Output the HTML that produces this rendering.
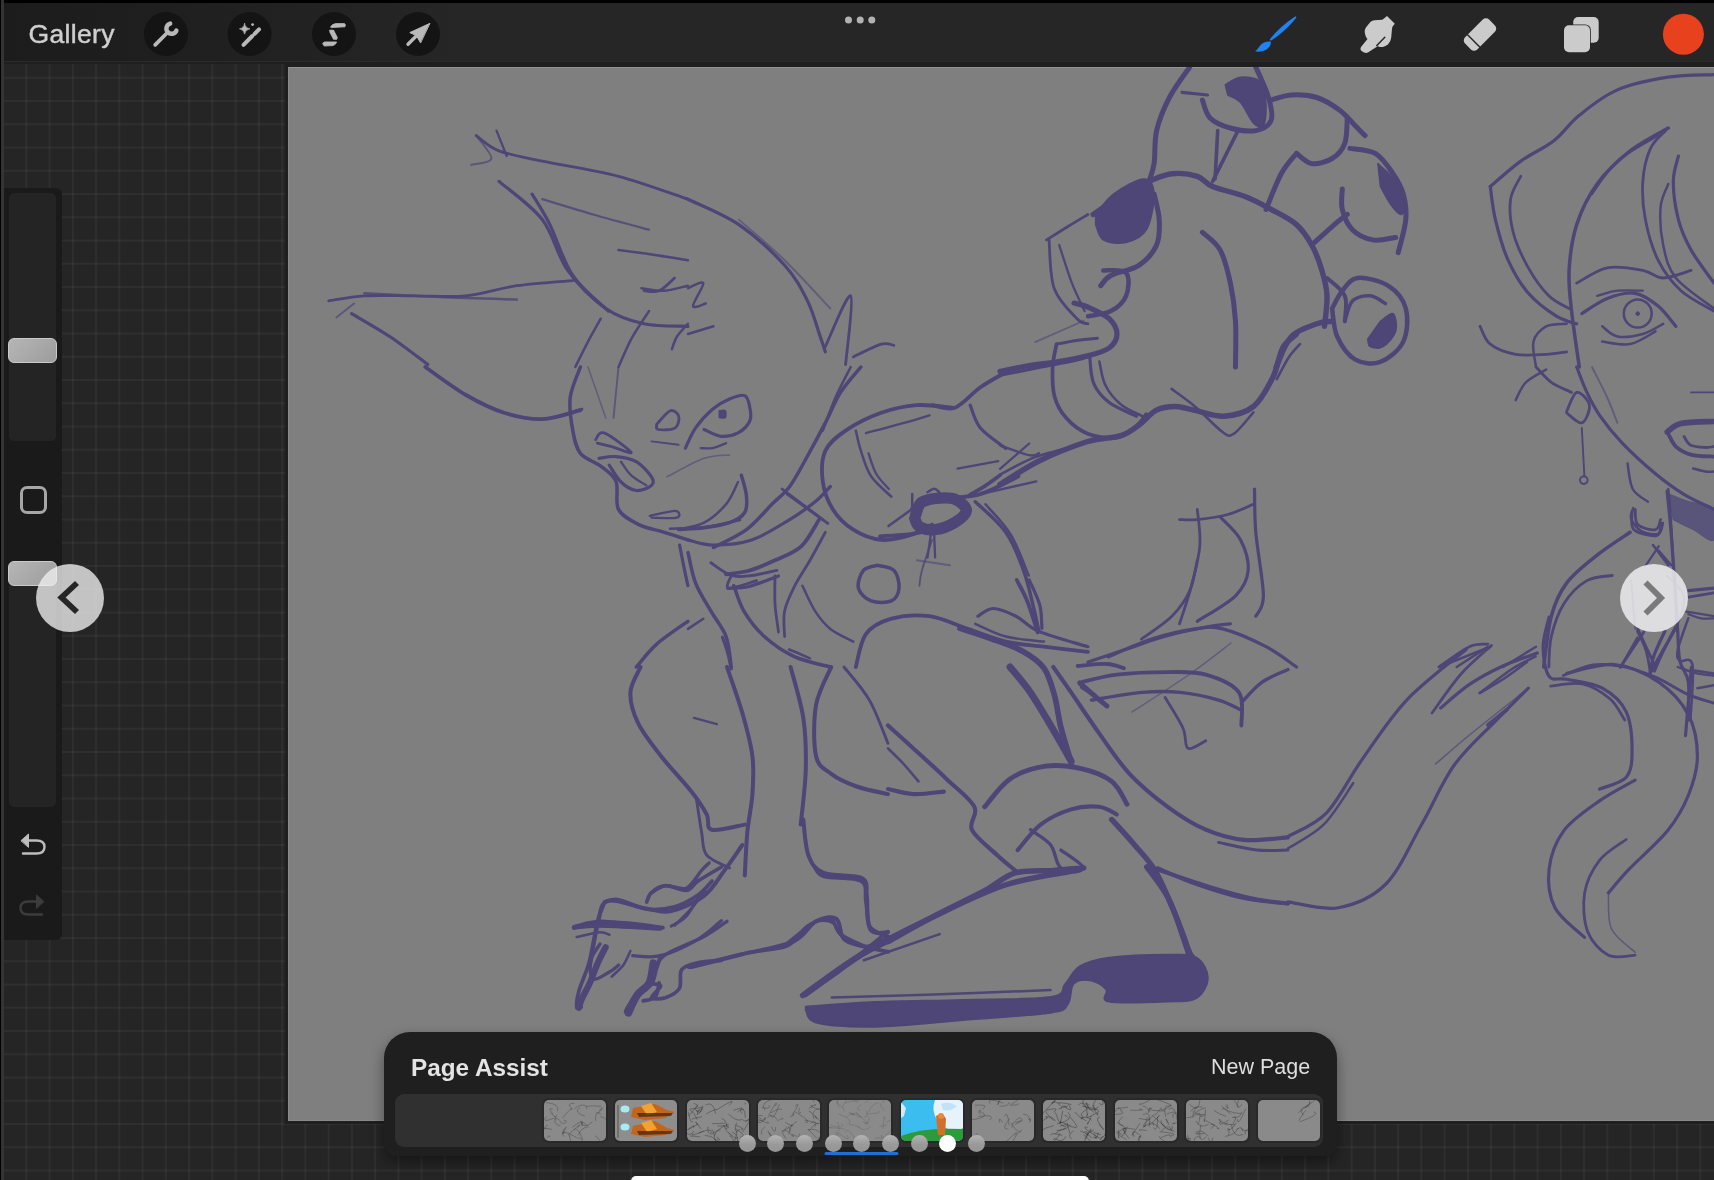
<!DOCTYPE html>
<html><head><meta charset="utf-8">
<style>
*{margin:0;padding:0;box-sizing:border-box}
html,body{width:1714px;height:1180px;overflow:hidden;background:#242424;font-family:"Liberation Sans",sans-serif}
.abs{position:absolute}
#grid{left:0;top:0;width:1714px;height:1180px;
 background-color:#252525;
 background-image:linear-gradient(to right, rgba(255,255,255,0.045) 0 1.8px, transparent 1.8px),
                  linear-gradient(to bottom, rgba(255,255,255,0.045) 0 1.8px, transparent 1.8px);
 background-size:23.25px 23.25px;
 background-position:25.4px 76.8px;}
#topblack{left:0;top:0;width:1714px;height:3px;background:#000}
#toolbar{left:0;top:3px;width:1714px;height:59px;background:linear-gradient(to right,#1c1c1c 0,#1e1e1e 120px,#222 300px,#262626 460px,#262626 100%)}
#tbline{left:0;top:61px;width:1714px;height:1px;background:#2b2b2b}
#tbband{left:0;top:62px;width:1714px;height:2px;background:#1f1f1f}
#leftedge{left:0;top:0;width:4px;height:1180px;background:#343434;border-left:1px solid #000}
#canvas{left:288px;top:67px;width:1426px;height:1054px;background:#7f7f7f;box-shadow:0 0 0 3px #1f1f1f;border-top:1px solid #939393;border-left:1px solid #8a8a8a;border-bottom:1px solid #8a8a8a}
#gallery{left:28.5px;top:18.5px;font-size:26.5px;color:#cfcfcf;letter-spacing:0.35px;-webkit-text-stroke:0.45px #cfcfcf;transform:translateZ(0)}
#sidebar{left:4px;top:188px;width:58px;height:752px;background:#1a1a1a;border-radius:0 6px 6px 0}
.track{left:9px;width:47px;background:#242424;border-radius:5px}
.handle{left:8px;width:49px;height:25px;border-radius:6px;background:linear-gradient(135deg,#b6b6b6,#9c9c9c);border:1px solid #cacaca}
#sq{left:20px;top:486px;width:27px;height:28px;border:3px solid #a6a6a6;border-radius:7px}
.navc{width:68px;height:68px;border-radius:50%}
#panel{left:384px;top:1032px;width:953px;height:124px;background:#1f1f1f;border-radius:26px 26px 12px 12px;box-shadow:0 6px 14px rgba(0,0,0,0.4)}
#strip{left:395px;top:1094px;width:928px;height:53px;background:#303030;border-radius:9px}
.thumb{top:1100px;width:62px;height:41px;background:#8a8a8a;border-radius:5px;overflow:hidden;box-shadow:0 0 0 2px #292929}
.dot{top:1135px;width:17px;height:17px;border-radius:50%;background:linear-gradient(#b4b4b4,#9a9a9a 55%,#949494)}
#pa{left:411px;top:1053.5px;font-size:24.3px;font-weight:bold;color:#e4e4e4;transform:translateZ(0)}
#np{left:1211px;top:1054.5px;font-size:21.5px;color:#dedede;transform:translateZ(0)}
#home{left:631px;top:1176px;width:458px;height:10px;background:#fff;border-radius:5px}
</style></head><body>
<div id="grid" class="abs"></div>
<div id="topblack" class="abs"></div>
<div id="toolbar" class="abs"></div>
<div id="tbline" class="abs"></div>
<div id="tbband" class="abs"></div>
<div id="leftedge" class="abs"></div>
<div id="canvas" class="abs"></div>
<svg class="abs" style="left:288px;top:67px" width="1426" height="1053" viewBox="0 0 1426 1053"><g fill="none" stroke="#4d4677" stroke-linecap="round" stroke-linejoin="round"><path d="M188.2 68.6 C192.0 71.2 200.0 79.7 211.0 83.9 C222.1 88.1 234.3 89.8 254.3 94.1 C274.2 98.3 306.3 103.0 330.5 109.3 C354.8 115.7 388.4 128.4 399.9 132.2" stroke-width="2.8"/><path d="M208.5 63.6 L218.7 89.0" stroke-width="2.3"/><path d="M188.2 68.6 C190.7 72.5 204.3 86.7 203.4 91.5 C202.6 96.4 186.5 96.8 183.1 97.9" stroke-width="1.9" opacity="0.70"/><path d="M211.0 114.4 C218.2 120.8 242.8 137.7 254.3 152.6 C265.7 167.4 269.1 188.6 279.7 203.4 C290.3 218.2 305.1 232.6 317.8 241.5 C330.5 250.4 342.3 253.8 356.0 256.8 C369.6 259.8 392.6 258.9 399.9 259.3" stroke-width="3.2"/><path d="M244.1 127.1 C247.1 132.2 255.1 144.1 261.9 157.6 C268.7 171.2 275.0 194.1 284.8 208.5 C294.5 222.9 314.4 238.2 320.4 244.1" stroke-width="3.2"/><path d="M254.3 132.2 C262.7 134.8 287.3 142.4 305.1 147.5 C322.9 152.6 351.7 160.2 361.0 162.7" stroke-width="2.3" opacity="0.80"/><path d="M330.5 183.1 C336.9 183.9 357.1 186.5 368.7 188.2 C380.2 189.8 394.7 192.4 399.9 193.2" stroke-width="2.5"/><path d="M353.4 221.2 C357.2 221.6 368.5 224.2 376.3 223.7 C384.1 223.3 396.0 219.5 399.9 218.7" stroke-width="2.5"/><path d="M386.5 211.0 C383.9 213.2 376.3 221.6 371.2 223.7 C366.1 225.9 358.5 223.7 356.0 223.7" stroke-width="2.8"/><path d="M40.7 233.9 C46.6 233.1 61.9 229.7 76.3 228.8 C90.7 228.0 110.2 228.8 127.1 228.8 C144.1 228.8 161.0 230.5 178.0 228.8 C194.9 227.1 211.0 221.2 228.8 218.7 C246.6 216.1 275.4 214.4 284.8 213.6" stroke-width="2.8"/><path d="M76.3 226.3 C89.0 226.9 127.1 229.0 152.6 230.1 C178.0 231.2 216.1 232.2 228.8 232.6" stroke-width="2.5" opacity="0.80"/><path d="M63.6 246.6 C69.9 250.4 89.0 261.0 101.7 269.5 C114.4 278.0 133.5 292.8 139.8 297.5" stroke-width="3.2"/><path d="M48.3 250.4 L66.1 236.5" stroke-width="1.9" opacity="0.70"/><path d="M312.7 251.7 C310.6 255.5 304.3 266.5 300.0 274.6 C295.8 282.7 289.4 295.8 287.3 300.0" stroke-width="2.5"/><path d="M361.0 244.1 C358.1 248.7 348.3 262.7 343.2 272.1 C338.2 281.4 332.7 295.4 330.5 300.0" stroke-width="2.5"/><path d="M399.9 256.8 C398.1 258.9 391.7 265.3 389.0 269.5 C386.3 273.8 384.8 280.1 383.9 282.2" stroke-width="2.5"/><path d="M400.0 132.2 C408.5 136.5 434.7 146.6 450.9 157.6 C467.0 168.7 485.2 185.6 496.6 198.3 C508.1 211.0 513.6 222.1 519.5 233.9 C525.4 245.8 529.2 261.0 532.2 269.5 C535.2 278.0 536.5 282.2 537.3 284.8" stroke-width="3.2"/><path d="M450.9 152.6 C458.5 159.3 481.4 178.4 496.6 193.2 C511.9 208.1 534.8 233.5 542.4 241.5" stroke-width="1.9" opacity="0.60"/><path d="M537.3 279.7 C541.5 271.2 559.3 225.9 562.7 228.8 C566.1 231.8 558.5 286.0 557.6 297.5" stroke-width="2.8"/><path d="M565.3 289.9 C569.9 287.7 586.5 279.0 593.2 277.1 C600.0 275.2 603.8 278.2 605.9 278.4" stroke-width="2.8"/><path d="M400.0 221.2 C402.5 220.4 414.4 213.2 415.3 216.1 C416.1 219.1 404.7 235.6 405.1 239.0 C405.5 242.4 415.7 236.9 417.8 236.5" stroke-width="2.5"/><path d="M400.0 267.0 L425.4 259.3" stroke-width="2.5"/><path d="M758.5 172.9 C761.9 170.8 771.9 164.4 778.8 160.2 C785.8 155.9 796.4 149.6 799.9 147.5" stroke-width="2.8"/><path d="M761.0 172.9 C761.9 180.9 761.5 208.1 766.1 221.2 C770.8 234.3 783.4 245.8 789.0 251.7 C794.7 257.6 798.1 256.0 799.9 256.8" stroke-width="2.8"/><path d="M771.2 178.0 C773.3 184.3 779.7 205.1 783.9 216.1 C788.2 227.1 794.5 239.4 796.6 244.1" stroke-width="2.3"/><path d="M901.7 0.0 C898.3 5.1 886.9 19.9 881.4 30.5 C875.9 41.1 871.2 52.5 868.6 63.6 C866.1 74.6 867.4 88.1 866.1 96.6 C864.8 105.1 861.9 111.5 861.0 114.4" stroke-width="5.0"/><path d="M807.6 147.5 C810.6 144.1 817.4 133.1 825.4 127.1 C833.5 121.2 849.2 111.9 855.9 111.9 C862.7 111.9 865.7 118.7 866.1 127.1 C866.5 135.6 863.1 154.7 858.5 162.7 C853.8 170.8 845.3 173.7 838.1 175.4 C830.9 177.1 820.3 175.9 815.3 172.9 C810.2 169.9 808.9 160.2 807.6 157.6 Z" fill="#4d4677" stroke="#4d4677" stroke-width="1.5"/><path d="M805.1 147.5 C810.2 144.1 826.3 132.6 835.6 127.1 C844.9 121.6 853.0 117.8 861.0 114.4 C869.1 111.0 875.9 107.6 883.9 106.8 C892.0 105.9 902.6 107.2 909.3 109.3 C916.1 111.5 916.5 116.1 924.6 119.5 C932.6 122.9 947.9 125.9 957.6 129.7 C967.4 133.5 974.6 137.7 983.1 142.4 C991.5 147.0 1001.7 151.7 1008.5 157.6 C1015.3 163.6 1019.5 170.4 1023.7 178.0 C1028.0 185.6 1031.4 194.9 1033.9 203.4 C1036.5 211.9 1038.6 219.5 1039.0 228.8 C1039.4 238.2 1036.9 254.3 1036.5 259.3" stroke-width="5.4"/><path d="M866.1 127.1 C867.0 131.4 870.8 144.1 871.2 152.6 C871.6 161.0 872.0 170.4 868.6 178.0 C865.3 185.6 858.5 193.2 850.9 198.3 C843.2 203.4 829.2 205.1 822.9 208.5 C816.5 211.9 814.4 217.0 812.7 218.7" stroke-width="5.0"/><path d="M815.3 203.4 C819.1 203.8 834.3 201.7 838.1 205.9 C842.0 210.2 840.7 222.5 838.1 228.8 C835.6 235.2 829.2 240.7 822.9 244.1 C816.5 247.5 803.8 248.3 800.0 249.2" stroke-width="4.5"/><path d="M937.3 17.8 C939.8 16.5 946.6 10.6 952.6 10.2 C958.5 9.7 968.7 10.6 972.9 15.3 C977.1 19.9 977.6 30.9 978.0 38.1 C978.4 45.3 977.6 55.5 975.4 58.5 C973.3 61.4 969.1 59.8 965.3 55.9 C961.5 52.1 956.8 40.3 952.6 35.6 C948.3 30.9 942.0 29.2 939.8 28.0 Z" fill="#4d4677" stroke="#4d4677" stroke-width="1.5"/><path d="M914.4 33.1 C915.7 36.0 917.4 46.2 922.0 50.9 C926.7 55.5 934.8 58.9 942.4 61.0 C950.0 63.1 961.0 64.8 967.8 63.6 C974.6 62.3 980.9 58.9 983.1 53.4 C985.2 47.9 983.1 39.4 980.5 30.5 C978.0 21.6 969.9 5.1 967.8 0.0" stroke-width="5.0"/><path d="M950.0 63.6 C947.9 67.8 941.5 80.5 937.3 89.0 C933.1 97.5 926.7 110.2 924.6 114.4" stroke-width="3.6"/><path d="M929.7 63.6 L927.1 111.9" stroke-width="3.6"/><path d="M894.1 25.4 L919.5 28.0" stroke-width="3.2"/><path d="M983.1 33.1 C986.5 32.2 995.8 28.4 1003.4 28.0 C1011.0 27.5 1020.8 28.0 1028.8 30.5 C1036.9 33.1 1045.4 38.6 1051.7 43.2 C1058.1 47.9 1062.7 54.2 1067.0 58.5 C1071.2 62.7 1075.4 67.0 1077.1 68.6" stroke-width="5.0"/><path d="M1059.3 50.9 C1058.9 55.1 1059.3 69.5 1056.8 76.3 C1054.3 83.1 1049.6 88.1 1044.1 91.5 C1038.6 94.9 1029.7 97.5 1023.7 96.6 C1017.8 95.8 1011.0 88.1 1008.5 86.4" stroke-width="5.0"/><path d="M978.0 142.4 C980.5 136.5 988.2 116.1 993.2 106.8 C998.3 97.5 1005.9 89.8 1008.5 86.4" stroke-width="5.0"/><path d="M1061.9 81.4 C1066.1 82.2 1080.1 82.2 1087.3 86.4 C1094.5 90.7 1100.4 100.0 1105.1 106.8 C1109.8 113.6 1113.2 119.5 1115.3 127.1 C1117.4 134.8 1118.7 142.8 1117.8 152.6 C1117.0 162.3 1111.5 180.1 1110.2 185.6" stroke-width="5.0"/><path d="M1089.9 96.6 C1092.4 99.2 1100.7 105.1 1105.1 111.9 C1109.6 118.7 1115.3 131.4 1116.6 137.3 C1117.8 143.2 1115.1 147.5 1112.7 147.5 C1110.4 147.5 1106.0 142.0 1102.6 137.3 C1099.2 132.6 1094.1 122.5 1092.4 119.5 Z" fill="#4d4677" stroke="#4d4677" stroke-width="1.5"/><path d="M1054.3 122.0 C1054.3 125.4 1052.6 135.6 1054.3 142.4 C1056.0 149.2 1059.3 157.6 1064.4 162.7 C1069.5 167.8 1077.6 171.6 1084.8 172.9 C1092.0 174.2 1103.8 170.8 1107.7 170.4" stroke-width="5.0"/><path d="M1023.7 178.0 C1028.0 174.2 1043.2 160.2 1049.2 155.1 C1055.1 150.0 1057.6 148.7 1059.3 147.5" stroke-width="5.0"/><path d="M914.4 165.3 C917.4 168.2 927.6 174.6 932.2 183.1 C936.9 191.5 939.8 204.3 942.4 216.1 C944.9 228.0 946.6 240.3 947.5 254.3 C948.3 268.2 947.5 292.4 947.5 300.0" stroke-width="5.0"/><path d="M1044.1 241.5 C1045.8 238.6 1050.0 228.8 1054.3 223.7 C1058.5 218.7 1061.9 211.9 1069.5 211.0 C1077.1 210.2 1092.0 213.6 1100.0 218.7 C1108.1 223.7 1115.3 232.2 1117.8 241.5 C1120.4 250.9 1119.5 265.7 1115.3 274.6 C1111.0 283.5 1100.4 292.0 1092.4 294.9 C1084.3 297.9 1074.2 296.6 1067.0 292.4 C1059.8 288.2 1053.0 278.0 1049.2 269.5 C1045.4 261.0 1044.9 246.2 1044.1 241.5" stroke-width="4.5"/><path d="M1056.8 254.3 C1058.1 250.9 1060.2 238.2 1064.4 233.9 C1068.7 229.7 1076.7 228.4 1082.2 228.8 C1087.7 229.3 1094.9 235.2 1097.5 236.5" stroke-width="3.6"/><path d="M1092.4 254.3 C1094.5 253.0 1102.6 244.9 1105.1 246.6 C1107.7 248.3 1109.3 258.9 1107.7 264.4 C1106.0 269.9 1099.2 277.1 1094.9 279.7 C1090.7 282.2 1084.8 281.0 1082.2 279.7 C1079.7 278.4 1080.1 273.3 1079.7 272.1 Z" fill="#4d4677" stroke="#4d4677" stroke-width="1.5"/><path d="M1039.0 211.0 C1042.0 214.0 1053.8 221.6 1056.8 228.8 C1059.8 236.0 1056.8 250.0 1056.8 254.3" stroke-width="4.0"/><path d="M988.2 300.0 C990.7 294.9 996.6 276.7 1003.4 269.5 C1010.2 262.3 1022.1 259.3 1028.8 256.8 C1035.6 254.3 1041.5 254.7 1044.1 254.3" stroke-width="5.4"/><path d="M1202.3 119.5 C1207.4 115.3 1222.2 101.7 1232.8 94.1 C1243.4 86.4 1256.1 81.4 1265.8 73.7 C1275.6 66.1 1280.7 56.8 1291.3 48.3 C1301.9 39.8 1314.6 29.2 1329.4 22.9 C1344.2 16.5 1364.2 12.7 1380.3 10.2 C1396.4 7.6 1418.4 8.1 1426.0 7.6" stroke-width="3.2"/><path d="M1202.3 119.5 C1203.1 125.0 1204.4 140.3 1207.4 152.6 C1210.3 164.8 1214.6 180.9 1220.1 193.2 C1225.6 205.5 1232.4 217.0 1240.4 226.3 C1248.5 235.6 1260.3 244.1 1268.4 249.2 C1276.4 254.3 1285.3 255.5 1288.7 256.8" stroke-width="3.2"/><path d="M1232.8 109.3 C1231.1 113.1 1223.9 122.9 1222.6 132.2 C1221.3 141.5 1222.2 153.8 1225.2 165.3 C1228.1 176.7 1234.5 190.3 1240.4 200.9 C1246.3 211.5 1254.0 222.1 1260.8 228.8 C1267.5 235.6 1277.7 239.4 1281.1 241.5" stroke-width="2.8"/><path d="M1380.3 61.0 C1373.9 64.8 1354.0 74.6 1342.1 83.9 C1330.3 93.2 1318.0 104.7 1309.1 117.0 C1300.2 129.2 1293.4 143.2 1288.7 157.6 C1284.1 172.0 1281.9 189.0 1281.1 203.4 C1280.3 217.8 1281.9 228.0 1283.6 244.1 C1285.3 260.2 1290.0 290.7 1291.3 300.0" stroke-width="3.5"/><path d="M1370.1 68.6 C1363.3 72.9 1340.4 84.3 1329.4 94.1 C1318.4 103.8 1308.2 121.6 1304.0 127.1" stroke-width="2.3"/><path d="M1377.7 63.6 C1375.2 66.5 1366.3 72.9 1362.5 81.4 C1358.6 89.8 1355.7 102.6 1354.8 114.4 C1354.0 126.3 1354.8 139.4 1357.4 152.6 C1359.9 165.7 1364.2 181.4 1370.1 193.2 C1376.0 205.1 1383.6 215.3 1393.0 223.7 C1402.3 232.2 1420.5 240.7 1426.0 244.1" stroke-width="2.8"/><path d="M1390.4 89.0 C1389.6 93.2 1385.3 103.8 1385.3 114.4 C1385.3 125.0 1387.5 141.1 1390.4 152.6 C1393.4 164.0 1397.2 172.5 1403.1 183.1 C1409.1 193.7 1422.2 210.6 1426.0 216.1" stroke-width="3.2"/><path d="M1380.3 117.0 C1379.0 120.8 1373.5 129.7 1372.6 139.8 C1371.8 150.0 1372.6 166.1 1375.2 178.0 C1377.7 189.8 1379.4 200.4 1387.9 211.0 C1396.4 221.6 1419.7 236.5 1426.0 241.5" stroke-width="2.5"/><path d="M1288.7 216.1 C1293.8 213.6 1308.2 203.0 1319.2 200.9 C1330.3 198.7 1345.5 201.7 1354.8 203.4 C1364.2 205.1 1367.1 211.0 1375.2 211.0 C1383.2 211.0 1398.5 204.7 1403.1 203.4" stroke-width="2.8"/><path d="M1293.8 246.6 C1298.0 244.1 1310.3 234.8 1319.2 231.4 C1328.1 228.0 1338.7 225.0 1347.2 226.3 C1355.7 227.6 1363.3 233.5 1370.1 239.0 C1376.9 244.5 1384.9 256.0 1387.9 259.3" stroke-width="3.2"/><path d="M1309.1 228.8 C1312.5 228.0 1321.8 224.6 1329.4 223.7 C1337.0 222.9 1350.6 223.7 1354.8 223.7" stroke-width="2.3"/><path d="M1314.2 259.3 C1316.7 261.0 1322.6 268.2 1329.4 269.5 C1336.2 270.8 1347.2 269.1 1354.8 267.0 C1362.5 264.9 1371.8 258.5 1375.2 256.8" stroke-width="2.5"/><path d="M1314.2 274.6 C1318.8 275.0 1333.2 278.8 1342.1 277.1 C1351.0 275.4 1363.3 266.5 1367.5 264.4" stroke-width="2.5"/><path d="M1363.7 246.6 C1363.6 247.5 1363.4 250.3 1362.7 252.0 C1362.0 253.6 1360.9 255.3 1359.6 256.5 C1358.4 257.8 1356.7 258.9 1355.1 259.6 C1353.5 260.2 1351.5 260.6 1349.7 260.6 C1348.0 260.6 1346.0 260.2 1344.4 259.6 C1342.7 258.9 1341.1 257.8 1339.9 256.5 C1338.6 255.3 1337.5 253.6 1336.8 252.0 C1336.1 250.3 1335.8 248.4 1335.8 246.6 C1335.8 244.8 1336.1 242.9 1336.8 241.3 C1337.5 239.6 1338.6 238.0 1339.9 236.7 C1341.1 235.5 1342.7 234.4 1344.4 233.7 C1346.0 233.0 1348.0 232.6 1349.7 232.6 C1351.5 232.6 1353.5 233.0 1355.1 233.7 C1356.7 234.4 1358.4 235.5 1359.6 236.7 C1360.9 238.0 1362.0 239.6 1362.7 241.3 C1363.4 242.9 1363.6 245.7 1363.7 246.6" stroke-width="2.5"/><path d="M1351.3 246.6 C1351.2 246.8 1351.1 247.5 1350.8 247.7 C1350.6 248.0 1350.1 248.2 1349.7 248.2 C1349.4 248.2 1348.9 248.0 1348.7 247.7 C1348.4 247.5 1348.2 247.0 1348.2 246.6 C1348.2 246.3 1348.4 245.8 1348.7 245.6 C1348.9 245.3 1349.4 245.1 1349.7 245.1 C1350.1 245.1 1350.6 245.5 1350.8 245.6 Z" fill="#4d4677" stroke="#4d4677" stroke-width="1.5"/><path d="M1192.1 259.3 C1193.8 262.3 1196.3 272.5 1202.3 277.1 C1208.2 281.8 1218.4 285.6 1227.7 287.3 C1237.0 289.0 1249.7 287.7 1258.2 287.3 C1266.7 286.9 1275.2 285.2 1278.6 284.8" stroke-width="2.8"/><path d="M1248.0 300.0 C1247.6 295.8 1243.8 281.4 1245.5 274.6 C1247.2 267.8 1252.7 262.3 1258.2 259.3 C1263.7 256.4 1275.2 257.2 1278.6 256.8" stroke-width="2.5"/><path d="M137.3 300.0 C144.1 304.7 164.8 320.3 178.0 328.0 C191.1 335.6 203.4 341.7 216.1 345.8 C228.8 349.8 241.5 352.5 254.3 352.1 C267.0 351.7 286.0 344.7 292.4 343.2" stroke-width="3.8"/><path d="M292.4 300.0 C290.7 305.1 283.5 319.9 282.2 330.5 C281.0 341.1 283.1 354.2 284.8 363.6 C286.5 372.9 287.7 380.5 292.4 386.4 C297.1 392.4 306.8 394.5 312.7 399.2 C318.7 403.8 325.0 407.2 328.0 414.4 C331.0 421.6 326.7 435.2 330.5 442.4 C334.4 449.6 343.2 453.8 350.9 457.6 C358.5 461.5 368.1 462.7 376.3 465.3 C384.5 467.8 396.0 471.6 399.9 472.9" stroke-width="3.5"/><path d="M348.3 600.0 C351.7 596.2 360.1 584.8 368.7 577.1 C377.3 569.5 394.7 558.1 399.9 554.3" stroke-width="3.5"/><path d="M391.6 478.0 C392.4 482.2 395.2 496.6 396.6 503.4 C398.0 510.2 399.4 516.1 399.9 518.7" stroke-width="3.2"/><path d="M300.0 300.0 L317.8 350.9" stroke-width="1.5" opacity="0.60"/><path d="M330.5 300.0 L325.5 350.9" stroke-width="1.9" opacity="0.70"/><path d="M400.0 472.9 C404.2 473.7 414.8 478.0 425.4 478.0 C436.0 478.0 450.9 477.1 463.6 472.9 C476.3 468.7 491.1 458.9 501.7 452.6 C512.3 446.2 520.3 440.3 527.1 434.8 C533.9 429.2 539.8 422.0 542.4 419.5" stroke-width="3.2"/><path d="M572.9 300.0 C569.5 304.2 558.5 316.1 552.6 325.4 C546.6 334.7 542.8 345.3 537.3 355.9 C531.8 366.5 525.4 378.4 519.5 389.0 C513.6 399.6 507.6 411.5 501.7 419.5 C495.8 427.6 491.1 430.1 483.9 437.3 C476.7 444.5 468.2 455.5 458.5 462.7 C448.7 469.9 430.9 477.6 425.4 480.5" stroke-width="3.5"/><path d="M562.7 300.0 C560.2 305.1 552.1 319.9 547.5 330.5 C542.8 341.1 536.9 358.1 534.8 363.6" stroke-width="2.5"/><path d="M494.1 422.0 L534.8 452.6" stroke-width="2.8"/><path d="M499.2 427.1 L539.8 456.4" stroke-width="2.8"/><path d="M664.4 340.7 C658.5 340.3 640.7 337.3 628.8 338.1 C617.0 339.0 605.1 341.5 593.2 345.8 C581.4 350.0 567.0 357.2 557.6 363.6 C548.3 369.9 541.1 375.4 537.3 383.9 C533.5 392.4 533.5 404.7 534.8 414.4 C536.0 424.2 539.8 434.3 544.9 442.4 C550.0 450.4 557.2 457.6 565.3 462.7 C573.3 467.8 583.5 472.0 593.2 472.9 C603.0 473.7 615.3 470.4 623.7 467.8 C632.2 465.3 640.7 459.3 644.1 457.6" stroke-width="3.8"/><path d="M567.8 363.6 C568.7 367.0 570.4 376.3 572.9 383.9 C575.4 391.5 578.0 401.7 583.1 409.3 C588.2 417.0 600.0 426.3 603.4 429.7" stroke-width="2.5"/><path d="M580.5 386.4 C581.8 389.8 584.8 400.9 588.2 406.8 C591.5 412.7 598.7 419.5 600.9 422.0" stroke-width="2.3"/><path d="M578.0 366.1 C584.3 364.4 605.5 358.9 616.1 355.9 C626.7 353.0 637.3 349.6 641.5 348.3" stroke-width="2.3"/><path d="M644.1 338.1 C647.9 338.6 658.9 343.6 667.0 340.7 C675.0 337.7 683.9 326.3 692.4 320.3 C700.9 314.4 713.6 307.6 717.8 305.1" stroke-width="3.8"/><path d="M682.2 338.1 C683.9 342.0 686.5 353.8 692.4 361.0 C698.3 368.2 713.6 378.0 717.8 381.4" stroke-width="3.2"/><path d="M623.7 442.4 C628.8 440.7 642.8 434.8 654.3 432.2 C665.7 429.7 679.7 430.9 692.4 427.1 C705.1 423.3 724.2 412.3 730.5 409.3" stroke-width="3.8"/><path d="M669.5 401.7 L710.2 394.1" stroke-width="2.3"/><path d="M692.4 427.1 L748.3 414.4" stroke-width="2.5"/><path d="M687.3 434.8 C692.4 439.8 709.8 453.8 717.8 465.3 C725.9 476.7 731.0 490.7 735.6 503.4 C740.3 516.1 743.2 531.4 745.8 541.5 C748.3 551.7 750.0 560.6 750.9 564.4" stroke-width="3.5"/><path d="M697.5 437.3 C701.7 442.4 715.7 455.9 722.9 467.8 C730.1 479.7 737.7 501.7 740.7 508.5" stroke-width="2.5"/><path d="M589.4 498.3 C592.2 499.2 602.3 499.6 605.9 503.4 C609.6 507.2 611.5 516.1 611.0 521.2 C610.6 526.3 608.1 531.8 603.4 533.9 C598.7 536.0 588.6 536.0 583.1 533.9 C577.6 531.8 571.6 526.3 570.4 521.2 C569.1 516.1 572.3 507.2 575.4 503.4 C578.6 499.6 587.1 499.2 589.4 498.3" stroke-width="3.5"/><path d="M400.0 485.6 C401.3 490.7 403.8 506.4 407.6 516.1 C411.4 525.9 417.8 535.2 422.9 544.1 C428.0 553.0 434.7 560.2 438.1 569.5 C441.5 578.8 442.4 594.9 443.2 600.0" stroke-width="3.5"/><path d="M445.8 518.7 C447.5 522.9 450.9 535.6 455.9 544.1 C461.0 552.6 467.8 561.9 476.3 569.5 C484.8 577.1 495.8 584.8 506.8 589.9 C517.8 594.9 536.5 598.3 542.4 600.0" stroke-width="3.5"/><path d="M422.9 495.8 C426.3 497.9 436.4 506.4 443.2 508.5 C450.0 510.6 455.9 509.3 463.6 508.5 C471.2 507.6 484.8 504.3 489.0 503.4" stroke-width="2.8"/><path d="M443.2 508.5 C442.8 510.6 436.4 520.4 440.7 521.2 C444.9 522.1 464.0 514.8 468.6 513.6" stroke-width="2.8"/><path d="M567.8 600.0 C569.5 594.5 572.0 575.0 578.0 567.0 C583.9 558.9 592.8 554.7 603.4 551.7 C614.0 548.7 628.8 547.5 641.5 549.2 C654.3 550.9 667.0 557.6 679.7 561.9 C692.4 566.1 705.1 571.6 717.8 574.6 C730.5 577.6 742.3 578.0 756.0 579.7 C769.6 581.4 792.6 583.9 799.9 584.8" stroke-width="3.8"/><path d="M537.3 465.3 C534.8 469.9 527.1 484.3 522.0 493.2 C517.0 502.1 511.0 510.2 506.8 518.7 C502.6 527.1 498.3 535.6 496.6 544.1 C494.9 552.6 496.6 565.3 496.6 569.5" stroke-width="2.8"/><path d="M514.4 518.7 C516.5 522.9 522.5 536.9 527.1 544.1 C531.8 551.3 536.0 556.8 542.4 561.9 C548.7 567.0 561.5 572.5 565.3 574.6" stroke-width="2.5"/><path d="M644.1 472.9 C642.4 478.0 636.0 495.8 633.9 503.4 C631.8 511.0 631.8 516.1 631.4 518.7" stroke-width="1.9" opacity="0.80"/><path d="M628.8 493.2 L661.9 498.3" stroke-width="1.9" opacity="0.60"/><path d="M689.9 549.2 C692.4 547.9 698.8 541.5 705.1 541.5 C711.5 541.5 720.4 545.4 728.0 549.2 C735.6 553.0 738.9 559.3 750.9 564.4 C762.9 569.5 791.8 577.1 799.9 579.7" stroke-width="3.2"/><path d="M687.3 556.8 C692.4 558.9 706.4 566.5 717.8 569.5 C729.3 572.5 749.6 573.8 756.0 574.6" stroke-width="2.5"/><path d="M400.0 561.9 L415.3 551.7" stroke-width="2.5"/><path d="M891.5 452.6 C894.5 452.6 901.3 453.4 909.3 452.6 C917.4 451.7 930.5 450.0 939.8 447.5 C949.2 444.9 961.0 439.0 965.3 437.3" stroke-width="2.8"/><path d="M966.5 422.0 C966.8 429.2 966.3 447.5 967.8 465.3 C969.3 483.1 975.4 514.8 975.4 528.8 C975.4 542.8 969.1 545.8 967.8 549.2" stroke-width="3.2"/><path d="M909.3 442.4 C909.8 448.3 912.7 465.7 911.9 478.0 C911.0 490.3 907.6 503.0 904.2 516.1 C900.9 529.3 893.7 550.0 891.5 556.8" stroke-width="2.8"/><path d="M932.2 450.0 C935.6 453.8 947.9 464.0 952.6 472.9 C957.2 481.8 961.0 494.1 960.2 503.4 C959.3 512.7 955.9 520.4 947.5 528.8 C939.0 537.3 915.7 550.0 909.3 554.3" stroke-width="3.2"/><path d="M853.4 572.1 C858.5 568.2 875.9 557.2 883.9 549.2 C892.0 541.1 897.5 533.1 901.7 523.7 C905.9 514.4 908.1 498.3 909.3 493.2" stroke-width="2.8"/><path d="M800.0 594.9 C806.4 592.8 825.4 586.5 838.1 582.2 C850.9 578.0 862.3 573.3 876.3 569.5 C890.3 565.7 911.0 561.5 922.0 559.3 C933.1 557.2 939.0 557.2 942.4 556.8" stroke-width="3.2"/><path d="M820.3 589.9 C827.5 586.9 849.2 576.7 863.6 572.1 C878.0 567.4 894.9 563.6 906.8 561.9 C918.7 560.2 922.9 558.9 934.8 561.9 C946.6 564.9 965.7 573.3 978.0 579.7 C990.3 586.0 1003.4 596.6 1008.5 600.0" stroke-width="3.2"/><path d="M1150.9 600.0 C1156.0 596.6 1173.2 583.5 1181.4 579.7 C1189.6 575.9 1196.9 577.6 1199.9 577.1" stroke-width="2.8"/><path d="M1168.7 600.0 L1199.9 579.7" stroke-width="2.5"/><path d="M1288.7 300.0 C1290.4 304.2 1295.1 317.4 1298.9 325.4 C1302.7 333.5 1305.7 339.8 1311.6 348.3 C1317.5 356.8 1325.2 366.5 1334.5 376.3 C1343.8 386.0 1357.4 398.3 1367.5 406.8 C1377.7 415.3 1385.8 421.2 1395.5 427.1 C1405.3 433.1 1420.9 439.8 1426.0 442.4" stroke-width="3.2"/><path d="M1304.0 300.0 C1306.5 305.1 1315.0 321.2 1319.2 330.5 C1323.5 339.8 1327.7 351.7 1329.4 355.9" stroke-width="1.9" opacity="0.60"/><path d="M1278.6 344.5 C1280.3 341.3 1284.9 326.5 1288.7 325.4 C1292.5 324.4 1300.6 333.1 1301.4 338.1 C1302.3 343.2 1297.6 354.7 1293.8 355.9 C1290.0 357.2 1281.1 347.5 1278.6 345.8" stroke-width="2.8"/><path d="M1293.8 361.0 L1296.4 409.3" stroke-width="1.9"/><path d="M1299.7 413.1 C1299.6 413.5 1299.5 414.5 1299.1 415.1 C1298.8 415.6 1298.3 416.1 1297.8 416.4 C1297.2 416.8 1296.5 417.0 1295.8 417.0 C1295.2 417.0 1294.5 416.8 1293.9 416.4 C1293.4 416.1 1292.9 415.6 1292.5 415.1 C1292.2 414.5 1292.0 413.8 1292.0 413.1 C1292.0 412.5 1292.2 411.8 1292.5 411.2 C1292.9 410.7 1293.4 410.2 1293.9 409.8 C1294.5 409.5 1295.2 409.3 1295.8 409.3 C1296.5 409.3 1297.2 409.5 1297.8 409.8 C1298.3 410.2 1298.8 410.7 1299.1 411.2 C1299.5 411.8 1299.6 412.8 1299.7 413.1" stroke-width="1.9"/><path d="M1227.7 333.1 C1229.4 330.1 1232.8 320.3 1237.9 315.3 C1243.0 310.2 1254.8 304.7 1258.2 302.5" stroke-width="2.5"/><path d="M1248.0 300.0 C1250.6 302.5 1257.4 311.0 1263.3 315.3 C1269.2 319.5 1280.3 323.7 1283.6 325.4" stroke-width="2.8"/><path d="M1403.1 325.4 L1426.0 325.4" stroke-width="1.9"/><path d="M1380.3 427.1 C1383.6 428.4 1393.0 432.2 1400.6 434.8 C1408.2 437.3 1421.8 436.0 1426.0 442.4 C1430.3 448.7 1429.4 469.5 1426.0 472.9 C1422.6 476.3 1412.5 466.1 1405.7 462.7 C1398.9 459.3 1388.7 454.3 1385.3 452.6 Z" fill="#4d4677" stroke="#4d4677" stroke-width="1.5" opacity="0.75"/><path d="M1380.3 422.0 C1380.7 427.1 1382.0 439.8 1382.8 452.6 C1383.6 465.3 1384.9 490.7 1385.3 498.3" stroke-width="2.5"/><path d="M1339.6 396.6 C1340.4 400.9 1341.3 415.7 1344.7 422.0 C1348.1 428.4 1357.4 432.6 1359.9 434.8" stroke-width="2.5"/><path d="M1347.2 442.4 C1347.6 444.9 1346.4 454.3 1349.7 457.6 C1353.1 461.0 1363.7 463.6 1367.5 462.7 C1371.4 461.9 1371.8 454.3 1372.6 452.6" stroke-width="2.8"/><path d="M1342.1 465.3 C1336.6 469.1 1319.7 479.7 1309.1 488.2 C1298.5 496.6 1286.2 505.9 1278.6 516.1 C1270.9 526.3 1267.1 535.2 1263.3 549.2 C1259.5 563.2 1256.9 591.6 1255.7 600.0" stroke-width="3.5"/><path d="M1324.3 508.5 C1320.1 509.3 1306.9 508.9 1298.9 513.6 C1290.8 518.2 1281.9 527.1 1276.0 536.5 C1270.1 545.8 1265.8 558.9 1263.3 569.5 C1260.8 580.1 1261.2 594.9 1260.8 600.0" stroke-width="2.8"/><path d="M1365.0 478.0 L1380.3 498.3" stroke-width="2.5"/><path d="M1349.7 561.9 L1367.5 600.0" stroke-width="2.8"/><path d="M1400.6 523.7 L1426.0 521.2" stroke-width="3.2"/><path d="M1395.5 544.1 L1426.0 549.2" stroke-width="2.3"/><path d="M1151.4 600.0 L1202.3 579.7" stroke-width="2.5"/><path d="M1215.0 600.0 L1248.0 579.7" stroke-width="2.5"/><path d="M352.6 600.0 C350.9 604.2 342.8 616.1 342.4 625.4 C342.0 634.7 344.9 645.3 350.0 655.9 C355.1 666.5 364.0 677.5 372.9 689.0 C381.8 700.4 395.8 714.8 403.4 724.6 C411.0 734.3 415.3 741.1 418.7 747.5 C422.1 753.8 417.4 761.0 423.7 762.7 C430.1 764.4 451.3 758.5 456.8 757.6" stroke-width="4.0"/><path d="M408.5 732.2 C409.3 737.7 411.9 755.9 413.6 765.3 C415.3 774.6 414.0 782.2 418.7 788.2 C423.3 794.1 437.7 798.7 441.5 800.9" stroke-width="2.9"/><path d="M439.0 600.0 C441.5 607.6 450.0 630.9 454.3 645.8 C458.5 660.6 462.7 675.4 464.4 689.0 C466.1 702.6 465.3 714.4 464.4 727.1 C463.6 739.8 460.6 751.7 459.3 765.3 C458.1 778.8 457.2 801.3 456.8 808.5" stroke-width="4.0"/><path d="M405.9 650.9 L428.8 657.2" stroke-width="2.4"/><path d="M502.6 600.0 C504.7 608.5 512.7 633.9 515.3 650.9 C517.8 667.8 518.2 683.9 517.8 701.7 C517.4 719.5 513.6 748.3 512.7 757.6" stroke-width="4.0"/><path d="M515.3 752.6 C516.1 758.5 517.0 779.3 520.4 788.2 C523.8 797.1 526.7 802.1 535.6 805.9 C544.5 809.8 566.6 807.2 573.8 811.0 C581.0 814.8 577.6 820.8 578.8 828.8 C580.1 836.9 577.9 852.6 581.4 859.3 C584.9 866.1 596.9 867.8 599.9 869.5" stroke-width="4.0"/><path d="M543.2 600.0 C540.7 606.4 530.5 623.3 528.0 638.1 C525.5 653.0 525.5 677.5 528.0 689.0 C530.5 700.4 536.5 701.7 543.2 706.8 C550.0 711.9 559.2 716.1 568.7 719.5 C578.1 722.9 594.7 725.9 599.9 727.1" stroke-width="4.0"/><path d="M556.0 600.0 C560.2 605.5 574.1 620.3 581.4 633.1 C588.7 645.8 596.9 669.1 599.9 676.3" stroke-width="2.9"/><path d="M454.3 778.0 C451.3 782.2 442.8 794.9 436.5 803.4 C430.1 811.9 425.0 822.1 416.1 828.8 C407.2 835.6 392.8 842.0 383.1 844.1 C373.3 846.2 368.2 843.2 357.6 841.5 C347.0 839.9 327.6 831.0 319.5 833.9 C311.5 836.9 312.3 848.3 309.3 859.3 C306.4 870.4 303.0 893.2 301.7 900.0" stroke-width="4.0"/><path d="M362.7 826.3 C365.3 825.0 372.0 819.5 378.0 818.7 C383.9 817.8 392.4 823.7 398.3 821.2 C404.3 818.7 409.8 807.6 413.6 803.4 C417.4 799.2 419.9 797.1 421.2 795.8" stroke-width="3.3"/><path d="M286.4 859.3 C291.5 858.5 302.6 853.8 317.0 854.3 C331.4 854.7 363.6 860.6 372.9 861.9" stroke-width="3.3"/><path d="M383.1 859.3 C385.6 857.6 393.7 854.3 398.3 849.2 C403.0 844.1 408.9 832.2 411.0 828.8" stroke-width="2.9"/><path d="M367.8 900.0 C369.5 897.9 369.9 892.4 378.0 887.3 C386.0 882.2 405.9 875.0 416.1 869.5 C426.3 864.0 435.2 856.8 439.0 854.3" stroke-width="3.3"/><path d="M403.4 900.0 C411.9 897.9 437.3 891.6 454.3 887.3 C471.2 883.1 492.8 880.1 505.1 874.6 C517.4 869.1 520.8 858.1 528.0 854.3 C535.2 850.4 543.7 848.7 548.3 851.7 C553.0 854.7 551.3 867.4 556.0 872.1 C560.6 876.7 569.0 877.6 576.3 879.7 C583.6 881.8 596.0 883.9 599.9 884.8" stroke-width="4.0"/><path d="M556.0 900.0 L599.9 864.4" stroke-width="3.3"/><path d="M722.0 600.0 C725.4 604.2 735.6 615.7 742.4 625.4 C749.2 635.2 755.9 647.0 762.7 658.5 C769.5 669.9 779.7 688.1 783.1 694.1" stroke-width="6.9"/><path d="M765.3 600.0 C768.2 604.2 775.4 614.4 783.1 625.4 C790.7 636.4 801.3 652.5 811.0 666.1 C820.8 679.7 830.1 694.5 841.5 706.8 C853.0 719.1 867.0 730.5 879.7 739.8 C892.4 749.2 905.1 757.2 917.8 762.7 C930.5 768.2 942.3 771.6 956.0 772.9 C969.6 774.2 992.6 770.8 999.9 770.4" stroke-width="4.1"/><path d="M930.5 775.4 C936.9 776.7 957.1 781.8 968.7 783.1 C980.2 784.3 994.7 783.1 999.9 783.1" stroke-width="3.0"/><path d="M600.0 658.5 C604.2 662.3 615.7 672.5 625.4 681.4 C635.2 690.3 648.3 702.1 658.5 711.9 C668.6 721.6 682.2 731.4 686.4 739.8 C690.7 748.3 680.1 754.7 683.9 762.7 C687.7 770.8 702.1 781.4 709.3 788.2 C716.5 794.9 724.2 800.9 727.1 803.4" stroke-width="4.1"/><path d="M600.0 681.4 C602.5 683.9 610.2 691.1 615.3 696.6 C620.3 702.1 628.0 711.5 630.5 714.4" stroke-width="2.5"/><path d="M600.0 722.0 C604.2 722.9 616.1 726.7 625.4 727.1 C634.7 727.6 650.9 725.0 655.9 724.6" stroke-width="4.1"/><path d="M696.6 739.8 C700.9 735.2 711.9 718.7 722.0 711.9 C732.2 705.1 745.8 700.9 757.6 699.2 C769.5 697.5 782.2 699.2 793.2 701.7 C804.3 704.2 816.1 708.5 823.7 714.4 C831.4 720.3 836.5 733.5 839.0 737.3" stroke-width="4.8"/><path d="M729.7 783.1 C733.5 778.8 743.7 764.4 752.6 757.6 C761.5 750.9 773.3 745.4 783.1 742.4 C792.8 739.4 803.4 739.0 811.0 739.8 C818.7 740.7 825.9 746.2 828.8 747.5" stroke-width="4.1"/><path d="M742.4 762.7 C745.8 765.3 757.6 771.6 762.7 778.0 C767.8 784.3 767.4 797.1 772.9 800.9 C778.4 804.7 795.8 803.8 795.8 800.9 C795.8 797.9 776.7 786.0 772.9 783.1" stroke-width="3.4"/><path d="M600.0 874.6 C608.5 869.9 634.7 855.1 650.9 846.6 C667.0 838.2 683.9 830.5 696.6 823.7 C709.3 817.0 715.7 809.3 727.1 805.9 C738.6 802.6 753.8 804.3 765.3 803.4 C776.7 802.6 790.7 801.3 795.8 800.9" stroke-width="5.5"/><path d="M823.7 752.6 C827.6 756.8 839.4 769.5 846.6 778.0 C853.8 786.5 860.6 792.8 867.0 803.4 C873.3 814.0 880.1 830.5 884.8 841.5 C889.4 852.6 891.6 859.8 894.9 869.5 C898.3 879.3 903.4 894.9 905.1 900.0" stroke-width="5.5"/><path d="M869.5 800.9 C875.4 803.4 890.7 811.0 905.1 816.1 C919.5 821.2 940.2 828.0 956.0 831.4 C971.8 834.8 992.6 835.6 999.9 836.5" stroke-width="3.4"/><path d="M793.2 615.3 C799.2 614.0 814.4 609.3 828.8 607.6 C843.2 605.9 864.9 605.1 879.7 605.1 C894.5 605.1 906.0 604.2 917.8 607.6 C929.7 611.0 944.9 617.0 950.9 625.4 C956.8 633.9 953.0 653.0 953.4 658.5" stroke-width="3.9"/><path d="M803.4 633.1 C811.9 631.8 839.4 626.7 854.3 625.4 C869.1 624.2 879.7 624.2 892.4 625.4 C905.1 626.7 920.4 630.1 930.5 633.1 C940.7 636.0 949.6 641.5 953.4 643.2" stroke-width="3.4"/><path d="M953.4 635.6 C956.8 632.2 966.0 620.8 973.8 615.3 C981.5 609.7 995.6 604.7 999.9 602.5" stroke-width="3.4"/><path d="M877.1 630.5 C880.1 635.6 891.1 652.5 894.9 661.0 C898.8 669.5 896.2 679.2 900.0 681.4 C903.8 683.5 914.9 675.0 917.8 673.7" stroke-width="2.8"/><path d="M793.2 620.3 L816.1 635.6" stroke-width="2.8"/><path d="M1000.0 769.5 C1006.4 765.6 1026.2 758.6 1038.6 745.8 C1050.9 732.9 1060.8 711.2 1074.2 692.4 C1087.5 673.6 1101.4 651.4 1118.7 633.1 C1136.0 614.8 1168.1 591.0 1178.0 582.6" stroke-width="3.2"/><path d="M1000.0 781.4 C1005.9 777.4 1024.7 768.5 1035.6 757.7 C1046.5 746.8 1060.3 723.0 1065.3 716.1" stroke-width="2.5"/><path d="M1000.0 834.8 C1008.4 835.8 1034.1 843.7 1050.4 840.7 C1066.7 837.7 1084.1 830.8 1097.9 817.0 C1111.7 803.1 1122.1 777.4 1133.5 757.7 C1144.9 737.9 1153.8 715.6 1166.1 698.3 C1178.5 681.0 1195.3 666.7 1207.7 653.8 C1220.0 641.0 1234.8 626.6 1240.3 621.2" stroke-width="3.2"/><path d="M1261.1 550.0 C1260.1 554.9 1255.1 569.8 1255.1 579.7 C1255.1 589.6 1257.1 603.9 1261.1 609.3 C1265.0 614.8 1269.9 610.3 1278.8 612.3 C1287.7 614.3 1304.6 615.8 1314.4 621.2 C1324.3 626.6 1333.2 634.5 1338.2 644.9 C1343.1 655.3 1344.1 672.6 1344.1 683.5 C1344.1 694.4 1343.6 703.8 1338.2 710.2 C1332.7 716.6 1315.9 720.1 1311.5 722.1" stroke-width="3.2"/><path d="M1347.1 713.2 C1341.1 716.6 1323.3 725.5 1311.5 733.9 C1299.6 742.3 1284.3 752.2 1275.9 763.6 C1267.5 775.0 1262.5 789.3 1261.1 802.2 C1259.6 815.0 1261.1 829.3 1267.0 840.7 C1272.9 852.1 1291.7 865.4 1296.6 870.4" stroke-width="3.2"/><path d="M1278.8 606.4 C1286.8 604.9 1311.0 596.0 1326.3 597.5 C1341.6 598.9 1358.4 606.9 1370.8 615.3 C1383.2 623.7 1394.0 635.5 1400.5 647.9 C1406.9 660.3 1409.4 676.1 1409.4 689.4 C1409.4 702.8 1405.4 715.6 1400.5 728.0 C1395.5 740.3 1389.6 751.2 1379.7 763.6 C1369.8 775.9 1351.0 791.8 1341.1 802.2 C1331.3 812.5 1323.8 821.9 1320.4 825.9" stroke-width="3.2"/><path d="M1320.4 825.9 C1320.9 831.8 1318.9 851.6 1323.3 861.5 C1327.8 871.4 1343.1 881.3 1347.1 885.2" stroke-width="1.5" opacity="0.70"/><path d="M1338.2 772.5 C1333.7 775.9 1318.4 784.4 1311.5 793.3 C1304.6 802.2 1298.6 814.0 1296.6 825.9 C1294.7 837.7 1295.7 854.1 1299.6 864.4 C1303.6 874.8 1312.5 884.2 1320.4 888.2 C1328.3 892.1 1342.6 888.2 1347.1 888.2" stroke-width="2.8"/><path d="M1332.2 600.4 L1356.0 564.8" stroke-width="2.8"/><path d="M1361.9 606.4 L1385.6 564.8" stroke-width="3.2"/><path d="M1397.5 668.7 L1403.4 600.4" stroke-width="3.2"/><path d="M1406.4 603.4 L1426.0 606.4" stroke-width="2.5"/><path d="M1409.4 621.2 L1426.0 618.2" stroke-width="2.5"/><path d="M433.4 800.0 C429.5 802.3 415.9 810.1 410.0 814.0 C404.2 817.9 403.8 822.6 398.4 823.3 C392.9 824.1 383.2 818.3 377.4 818.7 C371.5 819.1 366.5 822.9 363.4 825.7 C360.2 828.4 359.5 833.5 358.7 835.0" stroke-width="3.7"/><path d="M316.7 835.0 C319.0 834.6 323.7 831.5 330.7 832.7 C337.7 833.8 349.4 840.8 358.7 842.0 C368.0 843.2 378.1 842.0 386.7 839.7 C395.3 837.3 403.8 832.3 410.0 828.0 C416.3 823.7 421.7 816.3 424.0 814.0" stroke-width="3.7"/><path d="M316.7 835.0 C315.5 838.1 311.6 846.7 309.7 853.7 C307.7 860.7 306.6 869.6 305.0 877.0 C303.5 884.4 302.7 890.2 300.4 898.0 C298.0 905.8 293.0 916.7 291.0 923.7 C289.1 930.7 288.3 937.3 288.7 940.0 C289.1 942.7 292.6 940.0 293.3 940.0" stroke-width="3.7"/><path d="M286.3 860.7 C290.2 859.9 300.7 856.8 309.7 856.0 C318.6 855.2 329.1 855.2 340.0 856.0 C350.9 856.8 369.2 859.9 375.0 860.7" stroke-width="3.7"/><path d="M288.7 870.0 C292.6 869.2 306.6 865.7 312.0 865.3 C317.5 865.0 319.8 867.3 321.4 867.7" stroke-width="2.6"/><path d="M386.7 858.3 C389.4 855.6 398.0 847.8 403.0 842.0 C408.1 836.2 414.7 826.4 417.0 823.3" stroke-width="2.9"/><path d="M330.7 898.0 C329.1 899.2 325.6 902.7 321.4 905.0 C317.1 907.4 308.1 914.0 305.0 912.0 C301.9 910.1 301.5 899.2 302.7 893.3 C303.9 887.5 310.5 879.7 312.0 877.0" stroke-width="3.3"/><path d="M342.4 884.0 C341.2 886.3 338.5 893.7 335.4 898.0 C332.2 902.3 325.6 907.7 323.7 909.7" stroke-width="2.6"/><path d="M372.7 888.7 C371.9 891.0 369.6 898.0 368.0 902.7 C366.5 907.4 366.5 912.8 363.4 916.7 C360.2 920.6 353.2 922.1 349.4 926.0 C345.5 929.9 342.0 936.9 340.0 940.0 C338.1 943.1 338.1 943.9 337.7 944.7" stroke-width="4.0"/><path d="M344.7 888.7 C349.4 888.7 361.8 891.4 372.7 888.7 C383.6 886.0 399.9 878.2 410.0 872.3 C420.1 866.5 429.5 856.8 433.4 853.7" stroke-width="3.3"/><path d="M363.4 916.7 C364.9 917.1 372.7 916.7 372.7 919.0 C372.7 921.4 362.6 928.7 363.4 930.7 C364.1 932.6 372.7 932.2 377.4 930.7 C382.0 929.1 388.6 926.0 391.4 921.4 C394.1 916.7 390.6 907.0 393.7 902.7 C396.8 898.4 403.4 897.2 410.0 895.7 C416.6 894.1 429.5 893.7 433.4 893.3" stroke-width="3.7"/><path d="M400.7 900.4 C410.0 898.0 440.4 889.8 456.7 886.3 C473.0 882.8 488.6 883.6 498.7 879.3 C508.8 875.1 511.9 865.0 517.4 860.7 C522.8 856.4 526.7 854.5 531.4 853.7 C536.1 852.9 541.5 853.3 545.4 856.0 C549.3 858.7 549.3 866.1 554.7 870.0 C560.2 873.9 570.5 879.3 578.1 879.3 C585.6 879.3 596.3 871.6 600.0 870.0" stroke-width="3.3"/><path d="M517.4 928.4 C522.8 924.5 540.7 911.6 550.1 905.0 C559.4 898.4 565.1 893.7 573.4 888.7 C581.7 883.6 595.6 877.0 600.0 874.7" stroke-width="4.0"/><path d="M526.7 800.0 C528.3 801.6 528.3 807.0 536.1 809.3 C543.8 811.7 566.4 809.7 573.4 814.0 C580.4 818.3 576.5 826.8 578.1 835.0 C579.6 843.2 579.1 858.0 582.7 863.0 C586.4 868.1 597.1 865.0 600.0 865.3" stroke-width="4.0"/><path d="M514.6 928.4 C524.3 921.5 551.1 900.6 572.9 887.5 C594.8 874.4 621.5 861.3 645.9 849.6 C670.2 837.9 694.5 825.3 718.8 817.5 C743.1 809.7 779.6 805.3 791.7 802.9" stroke-width="5.5"/><path d="M575.8 893.3 L651.7 867.1" stroke-width="2.5"/><path d="M517.5 939.4 C529.2 938.7 561.3 935.9 587.5 934.8 C613.8 933.7 645.9 933.6 675.0 932.7 C704.2 931.9 745.5 932.5 762.5 929.8 C779.6 927.1 772.3 921.8 777.1 916.7 C782.0 911.6 784.4 903.6 791.7 899.2 C799.0 894.8 806.3 892.4 820.9 890.4 C835.5 888.5 864.6 887.5 879.2 887.5 C893.8 887.5 901.6 886.5 908.4 890.4 C915.2 894.3 920.1 904.0 920.1 910.9 C920.1 917.7 915.2 927.3 908.4 931.3 C901.6 935.3 893.8 934.2 879.2 934.8 C864.6 935.4 831.1 936.8 820.9 934.8 C810.7 932.7 820.9 926.0 818.0 922.5 C815.1 919.0 808.7 914.7 803.4 913.8 C798.0 912.8 789.8 912.8 785.9 916.7 C782.0 920.6 783.9 932.2 780.0 937.1 C776.2 942.0 780.0 943.2 762.5 945.9 C745.0 948.5 704.2 950.8 675.0 953.2 C645.9 955.5 611.8 959.4 587.5 959.9 C563.2 960.3 540.8 958.9 529.2 956.1 C517.5 953.2 519.4 945.1 517.5 942.9 Z" fill="#4d4677" stroke="#4d4677" stroke-width="1.5"/><path d="M858.8 800.0 C862.2 804.9 873.4 818.5 879.2 829.2 C885.1 839.9 889.9 854.5 893.8 864.2 C897.7 873.9 899.6 882.2 902.6 887.5 C905.5 892.9 909.9 894.8 911.3 896.3" stroke-width="5.5"/><path d="M870.5 802.9 C879.2 805.8 906.9 815.6 923.0 820.4 C939.0 825.3 953.9 829.4 966.7 832.1 C979.6 834.8 994.5 835.7 1000.0 836.5" stroke-width="4.1"/><path d="M500.0 875.8 C504.4 872.4 519.0 859.3 526.3 855.4 C533.5 851.5 539.4 850.6 543.8 852.5 C548.1 854.5 546.2 862.2 552.5 867.1 C558.8 872.0 576.8 879.2 581.7 881.7" stroke-width="3.4"/><path d="M307.6 372.7 C309.0 371.5 310.1 363.8 316.1 365.9 C322.0 368.0 342.1 383.1 343.2 385.4 C344.3 387.6 328.5 381.0 322.8 379.4 C317.2 377.9 311.5 376.6 309.3 376.1" stroke-width="2.8"/><path d="M311.0 391.3 C313.8 391.0 321.7 389.0 327.9 389.6 C334.1 390.2 342.3 391.3 348.3 394.7 C354.2 398.1 361.0 406.0 363.5 409.9 C366.1 413.9 366.1 416.2 363.5 418.4 C361.0 420.7 353.4 424.1 348.3 423.5 C343.2 422.9 337.5 419.3 333.0 415.0 C328.5 410.8 323.1 400.9 321.2 398.1" stroke-width="3.2"/><path d="M333.0 394.7 C334.7 397.0 338.9 404.3 343.2 408.3 C347.4 412.2 355.9 416.7 358.4 418.4" stroke-width="2.3"/><path d="M368.6 357.4 C370.9 355.1 378.5 345.3 382.2 343.8 C385.8 342.4 389.8 346.1 390.6 348.9 C391.5 351.8 390.6 358.5 387.3 360.8 C383.9 363.1 373.4 363.1 370.3 362.5 C367.2 361.9 368.9 358.3 368.6 357.4" stroke-width="2.8"/><path d="M397.4 381.1 C399.1 377.7 403.1 367.3 407.6 360.8 C412.1 354.3 418.9 347.0 424.5 342.2 C430.2 337.4 436.1 334.2 441.5 332.0 C446.9 329.7 453.4 327.2 456.7 328.6 C460.1 330.0 461.0 336.2 461.8 340.5 C462.7 344.7 463.8 349.8 461.8 354.0 C459.9 358.3 454.8 363.3 450.0 365.9 C445.2 368.4 438.7 369.8 433.0 369.3 C427.4 368.7 418.9 363.6 416.1 362.5" stroke-width="3.2"/><path d="M431.3 343.8 C432.3 343.8 436.3 342.7 437.3 343.8 C438.2 345.0 438.2 349.5 437.3 350.6 C436.3 351.8 432.3 350.6 431.3 350.6 Z" fill="#4d4677" stroke="#4d4677" stroke-width="1.5"/><path d="M412.7 381.1 C414.7 381.1 420.3 382.0 424.5 381.1 C428.8 380.3 435.8 376.9 438.1 376.1" stroke-width="2.3"/><path d="M363.5 374.4 L390.6 377.7" stroke-width="1.9"/><path d="M378.8 409.9 C385.0 406.8 405.6 395.0 416.1 391.3 C426.5 387.6 437.3 388.5 441.5 387.9" stroke-width="1.5" opacity="0.60"/><path d="M453.4 408.3 C454.2 411.6 457.9 422.4 458.4 428.6 C459.0 434.8 459.6 441.0 456.7 445.5 C453.9 450.1 448.3 453.2 441.5 455.7 C434.7 458.3 424.5 459.7 416.1 460.8 C407.6 461.9 394.9 462.2 390.6 462.5" stroke-width="3.5"/><path d="M450.0 415.0 C448.0 418.7 443.8 430.3 438.1 437.1 C432.5 443.8 424.0 451.5 416.1 455.7 C408.2 459.9 394.9 461.4 390.6 462.5" stroke-width="2.5"/><path d="M361.8 448.9 C366.1 448.1 382.7 443.6 387.3 443.8 C391.8 444.1 392.9 449.5 388.9 450.6 C385.0 451.8 367.8 450.6 363.5 450.6" stroke-width="2.3"/><path d="M272.0 348.9 L294.0 342.2" stroke-width="2.8"/><path d="M712.0 304.4 C716.9 303.4 731.5 300.1 741.2 298.5 C751.0 296.9 760.7 296.2 770.5 294.6 C780.2 293.0 791.3 291.0 799.7 288.8 C808.2 286.5 816.3 284.5 821.2 281.0 C826.0 277.4 829.0 272.2 829.0 267.3 C829.0 262.5 826.0 256.3 821.2 251.7 C816.3 247.2 805.6 242.6 799.7 240.0 C793.9 237.4 788.3 236.8 786.1 236.1" stroke-width="5.2"/><path d="M712.0 308.3 C718.5 307.0 738.0 303.1 751.0 300.5 C764.0 297.9 779.6 295.3 790.0 292.7 C800.4 290.1 809.5 286.2 813.4 284.9" stroke-width="3.2"/><path d="M768.5 277.1 C767.9 281.0 765.0 291.7 764.6 300.5 C764.3 309.2 764.3 321.3 766.6 329.7 C768.9 338.2 772.8 345.0 778.3 351.1 C783.8 357.3 791.3 363.5 799.7 366.7 C808.2 370.0 820.8 371.9 829.0 370.6 C837.1 369.3 843.6 362.8 848.5 358.9 C853.3 355.0 856.6 349.2 858.2 347.2" stroke-width="3.7"/><path d="M768.5 277.1 C772.1 276.4 783.2 274.2 790.0 273.2 C796.8 272.2 806.2 271.6 809.5 271.2" stroke-width="2.9"/><path d="M801.7 288.8 C802.3 293.3 802.3 308.3 805.6 316.1 C808.8 323.9 814.0 330.0 821.2 335.6 C828.3 341.1 843.9 346.9 848.5 349.2" stroke-width="3.2"/><path d="M811.4 294.6 C812.4 298.5 813.7 310.9 817.3 318.0 C820.8 325.2 826.7 332.3 832.9 337.5 C839.0 342.7 850.7 347.2 854.3 349.2" stroke-width="2.6"/><path d="M712.0 417.4 C718.5 413.5 736.4 401.2 751.0 394.0 C765.6 386.9 786.1 378.8 799.7 374.5 C813.4 370.3 824.1 371.6 832.9 368.7 C841.6 365.8 846.5 361.2 852.4 357.0 C858.2 352.8 862.1 346.3 867.9 343.4 C873.8 340.4 880.9 339.5 887.4 339.5 C893.9 339.5 898.8 341.7 906.9 343.4 C915.1 345.0 926.4 349.8 936.2 349.2 C945.9 348.5 957.3 345.9 965.4 339.5 C973.5 333.0 980.0 320.0 984.9 310.2 C989.8 300.5 990.8 288.1 994.7 281.0 C998.5 273.8 1006.0 269.6 1008.3 267.3" stroke-width="5.5"/><path d="M712.0 407.7 C717.8 404.8 734.1 395.0 747.1 390.1 C760.1 385.3 782.8 380.4 790.0 378.4" stroke-width="2.6"/><path d="M883.5 321.9 C887.4 324.8 898.5 332.3 906.9 339.5 C915.4 346.6 927.7 360.2 934.2 364.8 C940.7 369.3 940.7 370.0 945.9 366.7 C951.1 363.5 962.2 348.9 965.4 345.3" stroke-width="2.6"/><path d="M988.8 312.2 C990.8 308.6 996.6 296.6 1000.5 290.7 C1004.4 284.9 1010.1 279.3 1012.0 277.1" stroke-width="2.6"/><path d="M712.0 378.4 C716.9 380.1 734.7 386.9 741.2 388.2 C747.7 389.5 749.4 386.6 751.0 386.2" stroke-width="2.3"/><path d="M712.0 401.8 L741.2 376.5" stroke-width="2.3"/><path d="M747.1 275.1 L795.8 253.7" stroke-width="1.7" opacity="0.60"/><path d="M627.6 448.1 C628.6 446.0 629.6 438.2 633.5 435.4 C637.5 432.5 645.5 431.6 651.3 431.1 C657.1 430.7 663.8 430.7 668.3 432.8 C672.8 434.9 678.7 440.0 678.4 443.8 C678.2 447.7 671.7 452.6 666.6 455.7 C661.5 458.8 653.7 461.8 647.9 462.5 C642.1 463.2 635.4 461.8 631.8 459.9 C628.3 458.1 627.6 452.9 626.7 451.5" stroke-width="11.3"/><path d="M639.5 425.2 C640.6 424.6 644.3 421.8 646.2 421.8 C648.2 421.8 650.5 424.6 651.3 425.2" stroke-width="2.5"/><path d="M624.2 426.9 L624.2 440.5" stroke-width="2.5"/><path d="M600.5 459.1 L621.7 443.8" stroke-width="2.5"/><path d="M639.5 490.5 L642.8 467.6" stroke-width="2.3"/><path d="M647.1 490.5 L646.2 467.6" stroke-width="2.3"/><path d="M592.0 469.3 C596.2 469.0 610.4 468.3 617.4 467.6 C624.5 466.9 631.5 465.5 634.4 465.0" stroke-width="3.8"/><path d="M681.0 428.6 C683.8 426.9 692.8 421.8 697.9 418.4 C703.1 415.0 709.7 409.9 712.0 408.3" stroke-width="3.8"/><path d="M1379.1 424.2 C1379.6 429.5 1381.2 443.6 1382.3 456.0 C1383.4 468.3 1384.6 486.0 1385.5 498.3 C1386.4 510.7 1386.9 519.2 1387.6 530.1 C1388.3 541.1 1389.0 553.4 1389.7 564.0 C1390.4 574.6 1390.1 585.2 1391.8 593.7 C1393.6 602.2 1398.9 605.0 1400.3 614.9 C1401.7 624.8 1400.3 646.6 1400.3 653.0" stroke-width="3.2"/><path d="M1370.6 479.3 L1357.9 498.3" stroke-width="2.3"/><path d="M1370.6 483.5 L1383.4 498.3" stroke-width="2.3"/><path d="M1343.1 513.2 C1343.5 517.4 1344.5 530.5 1345.2 538.6 C1345.9 546.7 1347.0 558.0 1347.3 561.9" stroke-width="2.0" opacity="0.70"/><path d="M1379.1 508.9 C1381.9 512.5 1394.7 520.9 1396.1 530.1 C1397.5 539.3 1389.0 558.4 1387.6 564.0" stroke-width="2.0" opacity="0.70"/><path d="M1349.5 564.0 C1350.9 567.2 1355.8 576.4 1357.9 583.1 C1360.1 589.8 1361.5 600.7 1362.2 604.3" stroke-width="2.8"/><path d="M1377.0 564.0 C1375.2 567.9 1368.9 580.6 1366.4 587.3 C1363.9 594.0 1362.9 601.4 1362.2 604.3" stroke-width="3.2"/><path d="M1387.6 559.8 C1385.5 564.0 1378.4 577.8 1374.9 585.2 C1371.4 592.6 1367.8 601.1 1366.4 604.3" stroke-width="2.8"/><path d="M1400.3 551.3 C1398.5 556.6 1391.1 576.0 1389.7 583.1 C1388.3 590.1 1389.4 591.2 1391.8 593.7 C1394.3 596.1 1402.8 588.0 1404.5 597.9 C1406.3 607.8 1402.8 643.8 1402.4 653.0" stroke-width="2.5"/><path d="M1332.5 600.0 L1349.5 570.4" stroke-width="2.3"/><path d="M1400.3 530.1 L1425.9 525.9" stroke-width="2.8"/><path d="M1400.3 547.1 C1402.4 547.8 1408.7 550.6 1413.0 551.3 C1417.3 552.0 1423.8 551.3 1425.9 551.3" stroke-width="2.3"/><path d="M1389.7 600.0 C1392.9 601.1 1402.7 605.0 1408.8 606.4 C1414.8 607.8 1423.1 608.2 1425.9 608.5" stroke-width="2.3"/><path d="M1275.3 608.5 C1280.2 606.7 1294.7 599.3 1305.0 597.9 C1315.2 596.5 1326.2 597.9 1336.7 600.0 C1347.3 602.2 1357.9 606.0 1368.5 610.6 C1379.1 615.2 1390.7 623.3 1400.3 627.6 C1409.9 631.8 1421.7 634.6 1425.9 636.1" stroke-width="2.8"/><path d="M1262.6 619.1 C1267.9 618.7 1284.5 614.9 1294.4 617.0 C1304.3 619.1 1314.9 625.8 1321.9 631.8 C1329.0 637.8 1334.3 649.5 1336.7 653.0" stroke-width="2.8"/><path d="M1345.2 441.1 C1344.9 442.9 1341.7 447.8 1343.1 451.7 C1344.5 455.6 1349.1 462.0 1353.7 464.4 C1358.3 466.9 1367.1 468.0 1370.6 466.6 C1374.2 465.1 1374.2 457.7 1374.9 456.0" stroke-width="2.5"/><path d="M317.6 880.3 C316.3 882.9 312.3 890.2 309.7 896.2 C307.1 902.1 304.4 910.1 301.8 916.0 C299.1 922.0 295.6 927.8 293.8 931.9 C292.0 936.0 291.3 939.3 290.8 940.8" stroke-width="6.3"/><path d="M365.3 896.2 C364.6 899.5 363.9 910.7 361.3 916.0 C358.6 921.3 352.9 923.0 349.4 927.9 C345.9 932.9 341.9 942.8 340.5 945.8" stroke-width="7.6"/><path d="M371.2 916.0 C370.5 918.3 369.9 926.9 367.2 929.9 C364.6 932.9 357.3 933.2 355.3 933.9" stroke-width="3.8"/><path d="M285.9 860.5 C290.2 860.1 297.5 858.3 311.7 858.5 C325.9 858.6 361.3 861.0 371.2 861.5" stroke-width="4.4"/><path d="M543.8 930.4 C560.8 929.9 609.4 928.7 645.9 927.5 C682.3 926.3 743.1 923.8 762.5 923.1" stroke-width="2.5"/><path d="M1144.0 646.0 C1148.8 639.5 1163.1 618.3 1173.0 607.0 C1182.9 595.7 1198.4 583.2 1203.5 578.4" stroke-width="2.8"/><path d="M1152.7 641.0 C1157.5 637.1 1171.0 624.4 1181.5 617.4 C1192.0 610.4 1204.1 604.0 1215.4 598.8 C1226.7 593.6 1243.7 588.1 1249.3 586.0" stroke-width="3.2"/><path d="M1247.6 589.4 C1243.7 591.5 1233.3 595.9 1224.0 602.0 C1214.7 608.1 1197.1 622.0 1191.7 626.0" stroke-width="2.5"/><path d="M1191.7 626.0 C1195.7 623.7 1207.5 617.2 1215.4 612.0 C1223.3 606.8 1235.1 597.8 1239.0 595.0" stroke-width="2.5"/><path d="M1147.6 697.0 C1153.2 692.2 1166.0 680.7 1181.5 668.0 C1197.0 655.3 1230.9 628.7 1240.8 620.8" stroke-width="1.5" opacity="0.70"/><path d="M1200.0 658.0 L1218.8 642.8" stroke-width="3.8"/><path d="M1379.3 364.9 C1381.6 363.5 1385.3 358.2 1393.0 356.5 C1400.8 354.8 1420.5 354.8 1426.0 354.5" stroke-width="5.7"/><path d="M1380.8 367.9 C1382.1 370.0 1384.6 376.8 1388.5 380.1 C1392.3 383.5 1397.5 386.2 1403.7 387.8 C1410.0 389.4 1422.3 389.3 1426.0 389.6" stroke-width="3.8"/><path d="M1396.1 369.5 C1397.1 370.9 1398.6 376.0 1402.2 377.9 C1405.8 379.7 1413.5 380.2 1417.5 380.5 C1421.4 380.7 1424.6 379.7 1426.0 379.5" stroke-width="2.8"/><path d="M1405.2 401.5 C1407.3 402.0 1414.0 404.1 1417.5 404.6 C1420.9 405.1 1424.6 404.6 1426.0 404.6" stroke-width="2.5"/><path d="M1344.2 444.2 C1344.5 447.3 1341.7 458.5 1345.7 462.5 C1349.8 466.6 1364.0 469.7 1368.6 468.7 C1373.2 467.6 1372.4 458.5 1373.2 456.4" stroke-width="2.8"/><path d="M672.0 561.3 C677.2 563.0 693.0 567.9 703.5 571.8 C714.0 575.6 726.2 579.5 735.0 584.4 C743.8 589.3 750.8 593.9 756.0 601.2 C761.2 608.6 763.7 618.7 766.5 628.5 C769.3 638.3 770.0 648.8 772.8 660.0 C775.6 671.2 781.5 689.8 783.3 695.8" stroke-width="5.7"/><path d="M728.7 513.0 C730.5 516.5 735.7 525.2 739.2 534.0 C742.7 542.8 748.0 560.2 749.7 565.5" stroke-width="3.8"/><path d="M741.3 513.0 C743.0 517.2 749.7 530.2 751.8 538.2 C753.9 546.2 753.6 557.4 753.9 561.3" stroke-width="3.2"/><path d="M789.6 599.0 C794.5 598.7 811.3 596.6 819.0 597.0 C826.7 597.4 833.1 600.5 835.9 601.2" stroke-width="3.8"/><path d="M791.7 616.0 C794.5 618.4 804.0 626.8 808.6 630.6 C813.1 634.4 817.3 637.6 819.0 639.0" stroke-width="5.0"/><path d="M844.0 645.0 C853.7 638.7 885.5 618.5 902.0 607.0 C918.5 595.5 936.2 581.2 943.0 576.0" stroke-width="1.5" opacity="0.60"/><path d="M530.8 453.0 C527.9 457.4 520.6 472.5 513.3 479.3 C506.0 486.0 495.8 489.2 487.0 493.3 C478.3 497.3 469.0 501.4 460.8 503.8 C452.6 506.1 441.8 506.7 438.0 507.3" stroke-width="3.8"/><path d="M487.0 509.0 C487.0 513.7 486.5 527.7 487.0 537.0 C487.6 546.4 490.0 560.4 490.5 565.0" stroke-width="2.8"/><path d="M439.8 521.3 C443.3 521.0 452.3 521.6 460.8 519.5 C469.2 517.5 485.6 510.8 490.5 509.0" stroke-width="3.2"/><path d="M382.0 461.8 C387.9 461.5 405.4 461.5 417.0 460.0 C428.7 458.5 446.2 454.2 452.0 453.0" stroke-width="2.5"/><path d="M434.5 570.3 C435.4 572.9 438.3 580.8 439.8 586.0 C441.2 591.3 442.7 599.2 443.3 601.8" stroke-width="3.2"/><path d="M501.0 582.5 C502.5 583.1 506.3 584.6 509.8 586.0 C513.3 587.5 520.0 590.4 522.0 591.3" stroke-width="2.5"/></g></svg>

<div id="gallery" class="abs">Gallery</div>

<div id="sidebar" class="abs"></div>
<div class="abs track" style="top:193px;height:248px"></div>
<div class="abs handle" style="top:338px"></div>
<div id="sq" class="abs"></div>
<div class="abs track" style="top:561px;height:246px"></div>
<div class="abs handle" style="top:561px"></div>

<div class="abs navc" style="left:36px;top:564px;background:rgba(240,240,240,0.78)"></div>
<div class="abs navc" style="left:1620px;top:564px;background:rgba(242,242,244,0.82)"></div>

<div id="panel" class="abs"></div>
<div id="strip" class="abs"></div>
<div class="abs thumb" style="left:544.0px;background:#8a8a8a"><svg width="62" height="41" viewBox="0 0 62 41" style="display:block"><path d="M10.4 18.8 Q15.1 17.5 18.0 23.8 M48.4 21.7 Q39.4 30.4 36.6 20.7 M56.9 14.4 Q51.0 8.0 51.6 20.8 M12.9 14.8 Q7.2 24.0 16.5 26.0 M34.2 35.3 Q37.2 27.8 43.1 27.2 M2.3 16.6 Q-3.8 23.5 10.0 18.2 M55.0 10.8 Q63.0 3.3 53.5 14.1 M34.1 37.8 Q39.6 38.0 37.2 43.1 M18.8 23.8 Q25.9 21.1 19.6 20.1 M30.0 30.2 Q33.1 25.2 38.8 39.5 M51.1 35.6 Q51.4 35.5 57.2 42.1 M35.8 7.4 Q29.1 12.5 40.7 16.1 M43.0 6.5 Q37.3 2.7 30.4 8.8 M38.0 26.1 Q34.7 16.3 45.0 27.7 M8.6 9.1 Q2.8 6.9 9.3 14.4 M56.3 16.8 Q59.5 16.4 62.3 19.7 M33.6 27.9 Q41.1 18.9 24.1 35.1 M13.5 11.2 Q16.3 3.7 2.1 2.6 M5.9 37.0 Q5.4 33.9 3.1 38.0 M28.3 9.2 Q21.3 3.4 30.6 3.2 M25.9 36.4 Q24.0 31.6 28.7 48.0 M43.2 9.0 Q38.6 4.5 57.2 6.4 M19.7 36.7 Q14.3 26.9 33.4 38.1 M6.6 13.0 Q13.7 19.4 10.6 16.1 M22.5 26.9 Q16.1 36.5 20.9 32.4 M3.3 24.9 Q-3.8 32.7 -0.8 32.1 M2.2 29.2 Q-4.3 26.8 7.9 29.4 M27.9 9.9 Q28.9 5.3 18.4 18.1 M38.3 25.4 Q40.0 17.6 28.1 27.4 M19.4 33.9 Q17.3 33.1 21.7 27.3" fill="none" stroke="#333" stroke-width="0.7" opacity="0.50"/></svg></div>
<div class="abs thumb" style="left:615.4px;background:#8e8e8e"><svg width="62" height="41" viewBox="0 0 62 41" style="display:block"><g fill="#c4651c"><path d="M18 8 L40 4 L52 10 L60 12 L50 18 L30 20 L16 17 Z"/><path d="M18 26 L40 21 L52 28 L60 30 L50 35 L30 37 L16 34 Z"/></g><g fill="#f2a232"><path d="M26 6 L36 3 L42 12 L32 15 Z"/><path d="M26 23 L36 20 L42 29 L32 32 Z"/></g><g fill="#3a2418" opacity="0.7"><path d="M22 13 L58 13 L56 16 L24 17 Z"/><path d="M22 31 L58 31 L56 34 L24 35 Z"/></g><g fill="#a6ecf2"><ellipse cx="10" cy="9" rx="4.5" ry="3.5"/><ellipse cx="10" cy="27" rx="4.5" ry="3.5"/></g><path d="M3 5 L3 38" stroke="#555" stroke-width="1"/></svg></div>
<div class="abs thumb" style="left:686.7px;background:#8a8a8a"><svg width="62" height="41" viewBox="0 0 62 41" style="display:block"><path d="M10.6 24.8 Q12.8 22.5 1.3 29.9 M37.8 23.0 Q40.2 23.3 25.0 23.7 M53.0 29.2 Q45.6 35.4 49.6 22.7 M42.0 24.5 Q36.4 25.2 40.4 24.6 M10.4 25.0 Q5.4 16.8 14.1 29.1 M21.3 27.4 Q19.9 25.4 21.6 33.4 M54.6 8.2 Q57.3 6.8 46.4 10.3 M34.4 18.3 Q40.9 21.1 39.1 27.6 M29.3 37.1 Q36.6 40.7 27.8 40.1 M24.7 29.5 Q27.1 30.2 27.5 39.5 M58.5 21.5 Q67.4 15.0 55.6 32.0 M6.2 33.7 Q1.3 37.4 16.9 31.0 M56.5 9.9 Q50.9 8.2 55.1 13.8 M10.3 19.7 Q8.1 12.8 2.7 9.7 M8.9 7.6 Q13.5 5.9 6.6 3.2 M16.1 9.0 Q10.1 8.3 10.4 14.8 M48.8 32.7 Q51.6 27.2 47.7 40.9 M7.4 8.3 Q14.1 17.6 15.5 5.6 M55.3 19.4 Q49.7 22.3 41.5 14.0 M42.7 36.1 Q45.5 35.6 48.5 47.1 M50.5 12.1 Q57.9 3.3 58.3 17.6 M12.9 37.1 Q15.0 36.8 2.9 36.0 M53.0 37.4 Q61.3 36.4 48.6 28.6 M16.4 7.1 Q12.0 8.2 2.7 9.1 M55.6 19.9 Q60.8 25.0 68.3 9.5 M57.6 3.1 Q59.6 2.6 57.8 4.5 M17.8 35.4 Q27.0 36.5 28.4 40.2 M6.6 27.7 Q9.6 21.8 -4.5 33.7 M10.8 4.5 Q5.4 12.2 1.8 16.0 M9.8 14.5 Q19.1 9.3 9.0 11.1 M30.0 9.6 Q26.8 9.3 19.1 14.2 M42.2 5.3 Q52.1 -4.3 29.7 9.8 M28.2 38.8 Q28.8 48.2 37.6 50.5 M5.2 19.5 Q4.1 18.4 15.0 16.8 M24.0 32.1 Q20.5 38.2 37.3 25.6 M45.1 32.1 Q52.0 34.8 50.2 42.1 M18.5 5.1 Q26.3 0.4 28.5 13.7 M44.8 36.4 Q38.3 30.8 36.6 25.0 M41.4 32.4 Q51.0 41.8 50.4 36.9 M27.5 36.1 Q29.2 29.5 33.6 30.0 M25.2 32.1 Q23.9 27.7 11.5 33.0 M5.8 21.4 Q3.8 25.0 1.1 11.7 M6.6 31.1 Q3.9 38.2 -5.1 30.3 M53.8 29.3 Q60.3 29.5 48.0 25.1 M38.8 28.8 Q47.9 25.4 30.2 26.0" fill="none" stroke="#333" stroke-width="0.7" opacity="0.60"/></svg></div>
<div class="abs thumb" style="left:758.0px;background:#8a8a8a"><svg width="62" height="41" viewBox="0 0 62 41" style="display:block"><path d="M58.8 18.9 Q53.1 10.4 64.9 24.5 M37.0 6.5 Q44.4 -1.1 33.7 15.9 M6.8 10.2 Q1.3 2.4 16.0 -1.2 M9.4 21.4 Q14.1 25.8 0.5 19.2 M26.1 31.1 Q21.0 28.5 28.1 38.9 M35.7 37.0 Q30.7 32.6 39.0 36.4 M14.5 38.5 Q15.1 42.7 25.3 48.0 M19.2 19.8 Q14.3 11.8 9.3 17.9 M55.3 5.6 Q47.1 5.3 64.1 10.4 M59.8 38.5 Q63.9 34.3 61.5 45.0 M33.9 24.1 Q32.8 29.1 30.9 31.7 M5.8 18.5 Q13.2 19.3 -7.0 22.0 M34.8 25.0 Q36.4 28.0 27.2 22.3 M24.0 19.7 Q27.6 16.2 19.3 21.0 M41.7 33.4 Q37.9 41.8 42.8 44.9 M12.6 15.4 Q14.8 22.9 21.4 4.2 M56.8 27.2 Q59.4 18.6 52.4 23.2 M3.6 34.6 Q2.2 30.4 7.2 26.5 M52.4 12.6 Q48.8 7.6 58.7 18.4 M32.2 16.8 Q38.1 15.2 34.9 12.7 M9.9 30.7 Q10.8 38.1 21.0 35.0 M56.2 2.3 Q52.8 -2.8 55.8 -9.2 M28.8 27.1 Q19.0 37.0 38.9 21.3 M47.4 22.4 Q56.0 22.9 36.5 11.6 M51.9 31.0 Q47.0 25.9 58.9 38.3 M27.2 30.4 Q28.7 29.9 35.4 36.6 M13.3 26.7 Q17.8 36.3 17.6 27.0 M56.7 6.0 Q60.5 1.7 50.8 8.7 M56.0 19.1 Q51.6 9.5 63.4 8.3 M47.9 21.3 Q44.4 18.4 60.6 23.9 M23.8 9.3 Q20.0 8.4 12.8 12.9 M43.1 12.1 Q39.6 15.5 41.4 7.9 M7.7 16.8 Q3.7 26.1 -3.2 20.9 M30.0 26.5 Q34.0 29.3 30.7 34.2 M3.9 7.3 Q13.4 10.0 10.9 5.1 M49.8 29.6 Q58.5 28.1 62.7 33.4 M17.5 6.1 Q20.7 -3.1 10.6 15.5 M3.6 19.0 Q-6.0 14.3 4.9 15.7 M52.9 28.8 Q56.2 22.8 61.8 23.3 M19.5 37.4 Q13.9 44.7 11.5 32.4" fill="none" stroke="#333" stroke-width="0.7" opacity="0.50"/></svg></div>
<div class="abs thumb" style="left:829.4px;background:#8a8a8a"><svg width="62" height="41" viewBox="0 0 62 41" style="display:block"><path d="M57.7 34.3 Q54.3 38.5 64.2 27.7 M48.8 2.6 Q41.2 5.7 39.5 12.1 M21.1 25.9 Q18.9 22.3 31.3 27.8 M38.0 25.2 Q38.8 20.4 35.5 24.4 M12.4 23.0 Q18.5 29.6 1.2 25.4 M16.6 17.3 Q26.5 11.3 28.5 13.7 M50.8 3.5 Q51.7 6.2 55.5 10.8 M55.0 38.9 Q45.8 36.4 46.0 39.4 M10.4 7.9 Q3.5 -1.9 13.9 -2.0 M49.2 11.0 Q53.5 13.6 37.2 13.9 M33.8 21.8 Q40.6 25.7 39.9 17.2 M51.8 35.0 Q52.2 39.6 61.3 35.4 M35.6 3.0 Q35.3 2.1 47.3 -4.2 M7.4 23.4 Q9.7 19.5 9.9 30.9 M34.8 37.5 Q25.0 41.3 38.6 45.7 M14.3 8.0 Q6.0 2.2 9.5 0.3 M15.4 11.2 Q9.4 2.3 23.7 1.2 M31.4 10.5 Q25.3 10.2 32.2 4.2 M6.2 34.7 Q7.2 43.7 7.9 32.2 M30.7 16.6 Q36.1 18.8 22.7 13.7 M18.0 35.2 Q23.5 43.5 7.7 31.8 M28.6 2.4 Q19.2 -0.6 30.3 0.7 M53.2 3.4 Q59.1 -0.5 44.1 -4.6 M41.7 27.0 Q34.1 33.0 28.0 25.5 M30.4 15.6 Q21.7 7.5 39.1 23.4 M20.7 13.6 Q30.2 17.0 19.1 11.8 M57.8 24.9 Q51.0 26.6 50.3 26.5 M10.3 36.4 Q4.7 30.6 4.8 45.9 M16.3 32.5 Q17.8 25.4 25.5 38.4 M15.8 3.2 Q20.1 -6.8 27.9 -5.7 M18.5 24.3 Q26.4 20.1 9.6 14.0 M2.4 28.1 Q-6.9 26.4 16.1 29.1 M37.3 11.1 Q40.5 17.7 35.0 16.9 M57.1 21.2 Q57.5 24.7 70.6 12.0 M55.9 19.4 Q55.3 10.6 54.1 28.8" fill="none" stroke="#333" stroke-width="0.7" opacity="0.25"/></svg></div>
<div class="abs thumb" style="left:900.8px;background:#3cbdf0"><svg width="62" height="41" viewBox="0 0 62 41" style="display:block"><path d="M34 0 L62 0 L62 28 L54 32 Q42 28 36 20 Q30 10 34 0 Z" fill="#e6f3fa"/><path d="M40 4 Q48 0 56 6 Q50 12 42 10 Z" fill="#bfe4f7"/><path d="M0 2 L5 8 L3 16 L0 18 Z" fill="#e8f4fa" opacity="0.85"/><path d="M0 36 Q22 27 62 29 L62 41 L0 41 Z" fill="#2d9a3c"/><path d="M35 16 Q42 12 45 19 L44 35 L37 35 Z" fill="#d0702a"/><circle cx="40" cy="16" r="3" fill="#e88a3a"/></svg></div>
<div class="abs thumb" style="left:972.1px;background:#8a8a8a"><svg width="62" height="41" viewBox="0 0 62 41" style="display:block"><path d="M43.2 35.3 Q49.6 26.5 29.7 46.0 M48.8 31.8 Q46.0 30.8 40.0 43.1 M39.9 27.5 Q39.6 20.3 46.8 22.2 M17.9 20.2 Q24.2 13.7 6.0 16.5 M27.1 3.4 Q20.8 8.3 33.8 -6.2 M27.7 22.5 Q26.1 15.5 30.7 22.4 M10.2 9.5 Q18.1 3.8 3.1 5.3 M9.6 11.9 Q18.7 17.3 -0.7 19.8 M57.3 22.3 Q60.4 17.1 56.0 19.6 M32.4 16.4 Q35.5 9.2 37.1 25.3 M36.4 29.1 Q28.3 29.8 37.5 18.6 M43.6 20.3 Q50.1 14.6 50.0 21.5 M50.2 29.7 Q46.1 35.4 39.4 23.1 M39.0 4.5 Q46.3 0.1 45.6 -0.1 M7.9 14.3 Q8.7 6.4 6.8 12.6 M17.9 3.5 Q13.6 -3.1 31.5 3.2 M37.1 2.2 Q37.6 6.3 27.5 6.2 M51.2 14.0 Q57.7 14.7 58.5 21.3 M46.3 3.3 Q47.4 5.5 37.6 5.1 M26.1 3.8 Q29.4 -1.4 21.0 -3.4 M46.1 21.8 Q53.9 18.5 43.0 24.6 M5.3 33.8 Q4.8 32.0 -0.6 43.2" fill="none" stroke="#333" stroke-width="0.7" opacity="0.50"/></svg></div>
<div class="abs thumb" style="left:1043.4px;background:#8a8a8a"><svg width="62" height="41" viewBox="0 0 62 41" style="display:block"><path d="M16.3 23.5 Q15.9 19.7 29.5 27.3 M10.0 39.0 Q11.9 43.1 17.1 33.0 M54.6 12.4 Q56.4 20.8 49.4 4.9 M44.6 7.2 Q37.8 7.0 41.0 -3.0 M10.9 12.0 Q18.0 6.7 3.7 10.1 M37.6 16.8 Q43.1 23.7 31.7 12.0 M44.5 34.9 Q39.2 36.2 50.9 30.1 M37.3 31.0 Q46.9 34.5 48.7 38.2 M41.6 31.6 Q49.1 31.8 41.5 38.7 M21.9 16.1 Q21.8 13.9 25.0 17.7 M44.8 27.3 Q35.1 25.3 57.0 38.4 M45.1 21.8 Q42.8 29.1 48.4 16.0 M40.9 34.5 Q48.2 42.8 52.6 44.6 M54.1 36.4 Q53.0 41.7 51.6 34.2 M58.7 26.9 Q51.4 18.2 56.7 16.8 M10.7 2.0 Q19.7 -4.9 7.8 -2.7 M7.4 35.2 Q8.2 32.0 19.2 35.5 M25.0 12.4 Q32.4 19.7 13.9 23.9 M10.6 25.6 Q2.0 27.7 -1.7 30.7 M11.2 38.2 Q19.6 43.9 22.8 36.4 M12.3 33.8 Q15.7 29.9 22.9 27.9 M3.5 19.0 Q7.5 13.8 -6.7 26.6 M25.4 4.4 Q32.0 13.8 21.4 6.9 M38.1 18.4 Q44.3 15.5 48.6 20.4 M53.6 9.2 Q51.1 11.5 50.6 2.7 M56.2 3.5 Q62.6 8.3 58.5 -3.3 M58.2 37.7 Q62.6 36.8 62.3 31.9 M17.4 6.0 Q10.2 0.4 28.4 4.5 M9.9 4.1 Q5.9 0.6 16.8 3.3 M17.9 20.9 Q16.2 28.5 19.8 10.6 M43.4 21.0 Q36.3 17.0 40.6 16.7 M8.8 3.3 Q18.0 -5.8 -1.8 15.1 M22.5 6.2 Q17.3 5.1 18.3 8.8 M12.2 21.0 Q10.5 16.5 2.4 16.7 M30.4 30.8 Q23.8 35.1 28.6 39.2 M50.1 37.2 Q53.9 39.8 55.4 32.7 M25.1 24.2 Q18.8 32.6 12.4 12.4 M3.2 11.5 Q1.5 11.6 10.6 20.6 M54.6 12.6 Q59.1 9.2 43.6 7.3 M35.4 4.7 Q43.4 -2.2 44.5 15.8 M57.8 34.8 Q51.0 32.2 50.1 32.9 M46.4 5.4 Q37.5 -1.3 50.9 12.5 M47.4 32.2 Q50.2 22.5 41.4 41.5 M44.4 8.6 Q34.7 15.2 39.9 16.3 M22.7 24.4 Q17.2 26.1 16.8 26.2 M27.6 24.7 Q22.1 31.1 13.7 30.3 M29.6 26.7 Q39.2 31.1 27.7 17.7 M58.4 26.9 Q64.2 33.6 56.0 24.3 M47.1 9.8 Q37.9 3.7 40.3 7.1 M23.3 7.7 Q27.2 4.2 15.7 9.0 M51.2 2.8 Q56.8 -2.8 38.6 -4.8 M45.0 13.3 Q39.0 21.6 53.5 13.0 M60.0 35.9 Q55.4 42.6 58.4 37.8 M24.3 22.8 Q23.2 21.0 26.8 33.2 M55.7 6.7 Q46.5 15.2 43.1 2.3" fill="none" stroke="#333" stroke-width="0.7" opacity="0.65"/></svg></div>
<div class="abs thumb" style="left:1114.8px;background:#8a8a8a"><svg width="62" height="41" viewBox="0 0 62 41" style="display:block"><path d="M9.6 32.2 Q5.1 26.1 20.2 29.4 M6.7 9.9 Q0.5 3.8 -1.7 18.4 M55.8 35.9 Q65.6 33.7 44.7 31.7 M38.4 27.6 Q42.9 33.9 42.5 16.9 M28.0 14.8 Q36.8 8.8 34.2 26.5 M46.0 20.1 Q45.7 28.2 59.7 31.4 M53.3 6.1 Q48.0 4.9 50.7 16.8 M38.5 15.0 Q40.4 16.1 46.5 7.4 M3.6 31.3 Q-2.6 31.9 11.7 39.7 M10.7 29.1 Q3.5 24.2 13.9 38.5 M6.2 36.3 Q10.9 35.2 10.2 27.7 M25.3 30.9 Q21.2 28.7 31.8 30.6 M24.5 8.9 Q33.9 10.5 15.3 10.3 M25.4 3.1 Q21.3 7.5 37.2 -1.3 M53.2 6.1 Q63.1 6.4 41.2 -0.7 M7.9 26.1 Q-0.7 23.5 8.0 16.6 M58.2 17.8 Q54.6 9.8 71.9 14.8 M37.1 8.0 Q27.5 10.4 49.7 11.0 M29.4 26.4 Q29.0 29.1 32.4 17.1 M6.9 34.4 Q-1.6 32.5 12.9 27.0 M38.5 25.3 Q39.5 18.7 27.8 27.6 M31.2 25.3 Q22.7 29.4 37.6 16.0 M59.3 22.7 Q52.5 26.0 70.2 19.8 M18.1 33.8 Q14.3 39.6 25.0 23.0 M5.2 10.3 Q14.5 14.5 -7.8 14.9 M53.7 9.3 Q60.2 3.8 62.4 21.1 M19.2 36.8 Q14.5 27.6 24.6 34.6 M47.0 24.1 Q56.8 32.4 37.0 15.2 M2.4 8.2 Q9.6 8.0 13.0 7.0 M24.0 37.4 Q29.5 30.0 18.7 48.0 M56.0 37.3 Q55.8 32.3 45.4 38.2 M44.7 36.2 Q43.0 39.1 55.3 43.6 M51.8 14.0 Q59.9 11.1 58.9 12.4 M33.7 18.7 Q38.4 21.2 23.8 18.4 M56.5 31.3 Q55.4 21.7 45.9 31.3 M56.7 25.7 Q60.0 31.1 51.7 28.7 M53.5 23.2 Q48.1 13.8 54.0 24.9 M44.9 28.8 Q39.6 21.0 33.3 25.2 M42.4 16.8 Q48.4 12.4 37.3 22.5 M34.7 11.8 Q30.6 5.4 27.9 6.1 M3.7 35.3 Q3.7 43.9 3.6 30.0 M7.8 33.9 Q17.3 29.4 2.2 22.4 M55.9 5.2 Q49.2 10.9 45.6 9.6 M26.6 37.4 Q23.0 34.4 24.4 41.2 M33.4 12.8 Q34.2 5.8 35.8 8.6" fill="none" stroke="#333" stroke-width="0.7" opacity="0.55"/></svg></div>
<div class="abs thumb" style="left:1186.2px;background:#8a8a8a"><svg width="62" height="41" viewBox="0 0 62 41" style="display:block"><path d="M18.2 19.0 Q18.3 28.1 19.5 9.4 M34.6 21.2 Q30.1 28.0 42.8 20.0 M11.7 34.9 Q12.0 26.2 22.4 36.1 M12.1 30.6 Q4.8 35.1 18.5 33.5 M59.4 34.3 Q57.9 27.3 64.0 33.0 M4.4 37.8 Q4.1 47.5 1.5 35.1 M55.0 27.5 Q58.0 33.4 63.0 28.2 M40.5 3.8 Q44.0 12.4 39.6 5.9 M47.4 17.5 Q52.5 14.7 46.8 24.2 M25.0 24.6 Q32.1 23.0 24.8 28.7 M35.6 9.4 Q37.7 6.2 44.3 14.2 M7.2 11.2 Q8.7 18.3 0.5 17.7 M55.9 11.9 Q54.5 18.6 46.2 17.3 M27.9 10.5 Q33.9 14.6 40.3 16.3 M57.2 34.4 Q48.0 39.3 45.1 24.3 M30.9 28.3 Q38.5 30.7 19.6 20.5 M10.9 6.4 Q3.2 16.0 19.4 14.6 M9.1 16.4 Q16.6 6.8 12.5 23.9 M16.7 7.1 Q9.5 5.5 4.8 11.2 M41.4 30.8 Q44.5 25.4 42.5 35.3 M15.0 37.5 Q6.1 33.8 8.2 47.3 M41.1 10.5 Q48.7 13.9 55.0 13.5 M51.6 6.9 Q49.2 -0.6 47.8 0.8 M10.0 20.9 Q12.9 29.1 22.6 24.3 M35.6 23.1 Q28.9 15.0 38.4 23.7 M51.4 19.4 Q51.4 27.7 59.7 8.6 M2.8 37.9 Q5.3 39.7 -1.4 38.2 M20.5 36.7 Q10.9 46.1 14.9 24.7 M15.9 14.7 Q12.8 19.1 18.3 15.1 M35.5 6.0 Q40.4 10.1 41.2 10.8 M3.4 4.2 Q13.2 14.2 14.0 -1.9 M51.8 28.1 Q49.8 35.1 38.9 36.4 M56.0 4.2 Q49.3 13.1 52.7 -1.3 M41.7 23.2 Q32.2 24.3 49.1 24.7 M41.3 28.0 Q43.4 33.1 50.1 22.9 M27.0 37.4 Q25.4 45.6 22.2 37.9 M51.3 29.2 Q55.6 25.5 56.7 31.3 M6.6 18.0 Q8.3 10.7 19.8 7.7" fill="none" stroke="#333" stroke-width="0.7" opacity="0.55"/></svg></div>
<div class="abs thumb" style="left:1257.5px;background:#8a8a8a"><svg width="62" height="41" viewBox="0 0 62 41" style="display:block"><path d="M55.5 11.9 Q64.2 13.6 41.7 21.8 M50.7 5.5 Q41.4 11.3 58.2 -0.8 M45.5 15.2 Q39.2 7.5 48.8 6.8 M40.2 12.8 Q41.1 12.1 53.3 2.3 M49.6 5.6 Q50.8 8.5 51.8 0.1 M47.7 10.4 Q46.8 11.0 40.7 20.8" fill="none" stroke="#333" stroke-width="0.7" opacity="0.50"/></svg></div>
<div id="pa" class="abs">Page Assist</div>
<div id="np" class="abs">New Page</div>
<div id="home" class="abs"></div>

<svg class="abs" style="left:0;top:0" width="1714" height="1180" viewBox="0 0 1714 1180">
 <!-- toolbar circles -->
 <g fill="#141414">
  <circle cx="166" cy="34" r="22"/><circle cx="249.5" cy="34" r="22"/><circle cx="334" cy="34" r="22"/><circle cx="418" cy="34" r="22"/>
 </g>
 <g fill="#b9b9b9" stroke="#b9b9b9" stroke-linecap="round">
  <!-- wrench -->
  <path d="M155.2 44.8 L166 34" stroke-width="3.8" fill="none"/>
  <path d="M170.2 23.6 A5.2 5.2 0 1 0 176.4 30.6" stroke-width="4.4" fill="none"/>
  <!-- wand -->
  <path d="M243.5 44.8 L252.3 36" stroke-width="4" fill="none"/>
  <path d="M254.6 33.8 L259 29.4" stroke-width="4" fill="none"/>
  <path d="M244.6 23.4 Q245.3 28 250 28.8 Q245.3 29.6 244.6 34.2 Q243.9 29.6 239.4 28.8 Q243.9 28 244.6 23.4 Z" stroke-width="0.6"/>
  <circle cx="252.6" cy="24.6" r="1.4" stroke="none"/>
  <!-- selection S -->
  <path d="M330.6 26.8 Q332 24.2 335.5 23.6 L344.5 23.6 Q346 24.5 345 26.8 L331.5 27.6 Z" stroke-width="0.8"/>
  <path d="M329.7 30.1 L333.6 30.1 L337.4 37.5 L336.8 39.4 L333.5 39.4 L329.9 32.4 Z" stroke-width="0.6"/>
  <path d="M323 43.3 Q323.5 41.9 325 41.9 L336.6 41.9 Q336 44.6 333 45.6 L324.4 46 Q322.8 45.4 323 43.3 Z" stroke-width="0.8"/>
  <!-- arrow -->
  <path d="M408 44.3 L417 35.3" stroke-width="3.4" fill="none"/>
  <path d="M429.6 23.5 L409.8 32.6 L416.4 35.6 L420.4 42.6 Z" stroke-width="1" stroke-linejoin="round"/>
 </g>
 <!-- dots top -->
 <g fill="#b2b2b2"><circle cx="848.5" cy="20.1" r="3.5"/><circle cx="860.2" cy="20.1" r="3.5"/><circle cx="871.8" cy="20.1" r="3.5"/></g>
 <!-- brush -->
 <g fill="#1e84f4">
  <path d="M1295.5 16.3 Q1280.8 25.75 1269.7 39.4 L1270.9 40.8 Q1285.7 31.25 1296.5 17.5 Z"/>
  <path d="M1270.8 41.6 C1271.6 45.2 1268.2 49.6 1263.2 51.1 C1260.2 52 1257.2 51.9 1255 51.3 C1257.6 50 1258.6 47 1261.1 44.5 C1263.6 42 1267.6 40.9 1270.8 41.6 Z"/>
 </g>
 <!-- smudge -->
 <path fill="#cbcbcb" d="M1387 15.9 L1394.8 23.7 L1392.4 26.8 C1391.8 29 1391.7 33 1391.3 37 C1390.8 40 1390 42 1389.3 42.4 C1388 44.5 1386.5 45.5 1385.4 45.9 C1383.5 46.8 1382 47.1 1380.7 47.1 C1379.5 47 1378.5 46.5 1378 45.9 L1367.9 52.6 C1366 53.3 1364 52.8 1362.8 51.8 C1361 50.8 1360.3 49.5 1360.5 49 C1360.5 48 1361 47 1361.6 46.3 L1367.5 38.9 C1366.5 38 1365.8 36.5 1365.5 35.4 C1364.8 33.5 1364.6 31.5 1364.8 30.3 C1365.2 28.5 1366 27.2 1366.7 26.4 L1370.6 21.8 C1371.8 20.8 1373 20.3 1374.5 20.2 L1382.3 19.8 L1384.3 18.2 Z"/>
 <path d="M1384.8 37.2 L1376.8 45.4" stroke="#262626" stroke-width="1.5" fill="none" stroke-linecap="round"/>
 <!-- eraser -->
 <g transform="translate(1480 34.5) rotate(-45)">
  <rect x="-17" y="-8.6" width="34" height="17.2" rx="4.5" fill="#cbcbcb"/>
  <path d="M-9 -9 L-9 9" stroke="#262626" stroke-width="1.5"/>
 </g>
 <!-- layers -->
 <rect x="1573.2" y="17.1" width="25.5" height="25.7" rx="5" fill="#cbcbcb"/>
 <rect x="1563" y="24.5" width="27.8" height="28.5" rx="5.5" fill="#262626"/>
 <rect x="1564" y="25.3" width="26" height="26.9" rx="5" fill="#cbcbcb"/>
 <!-- color -->
 <circle cx="1683.4" cy="34.3" r="20.5" fill="#e8411e"/>
 <!-- nav chevrons -->
 <path d="M77 583 L61.5 597.5 L77 612" stroke="#262626" stroke-width="5.8" fill="none"/>
 <path d="M1645.5 582.5 L1661 598 L1645.5 613.5" stroke="#7a7a7a" stroke-width="5.8" fill="none"/>
 <!-- undo / redo -->
 <g fill="none" stroke-linecap="round" stroke-linejoin="round">
  <path d="M27 840.5 L36.5 840.5 Q44.5 840.5 44.5 847 Q44.5 853.5 36.5 853.5 L23 853.5" stroke="#bdbdbd" stroke-width="2.4"/>
  <path d="M21.2 840.5 L28.5 834 L28.5 847 Z" fill="#bdbdbd" stroke="#bdbdbd" stroke-width="1"/>
  <path d="M38 901.5 L28.5 901.5 Q20.5 901.5 20.5 908 Q20.5 914.5 28.5 914.5 L42 914.5" stroke="#3c3c3c" stroke-width="2.4"/>
  <path d="M43.8 901.5 L36.5 895 L36.5 908 Z" fill="#3c3c3c" stroke="#3c3c3c" stroke-width="1"/>
 </g>
 <!-- blue underline -->
 <path d="M826 1153.5 L897 1153.5" stroke="#1f6fd6" stroke-width="3" stroke-linecap="round"/>
</svg>
<div class="abs dot" style="left:738.8px"></div>
<div class="abs dot" style="left:767.4px"></div>
<div class="abs dot" style="left:796.1px"></div>
<div class="abs dot" style="left:824.8px"></div>
<div class="abs dot" style="left:853.4px"></div>
<div class="abs dot" style="left:882.0px"></div>
<div class="abs dot" style="left:910.7px"></div>
<div class="abs dot" style="left:939.3px;background:#ffffff"></div>
<div class="abs dot" style="left:968.0px"></div>
</body></html>
